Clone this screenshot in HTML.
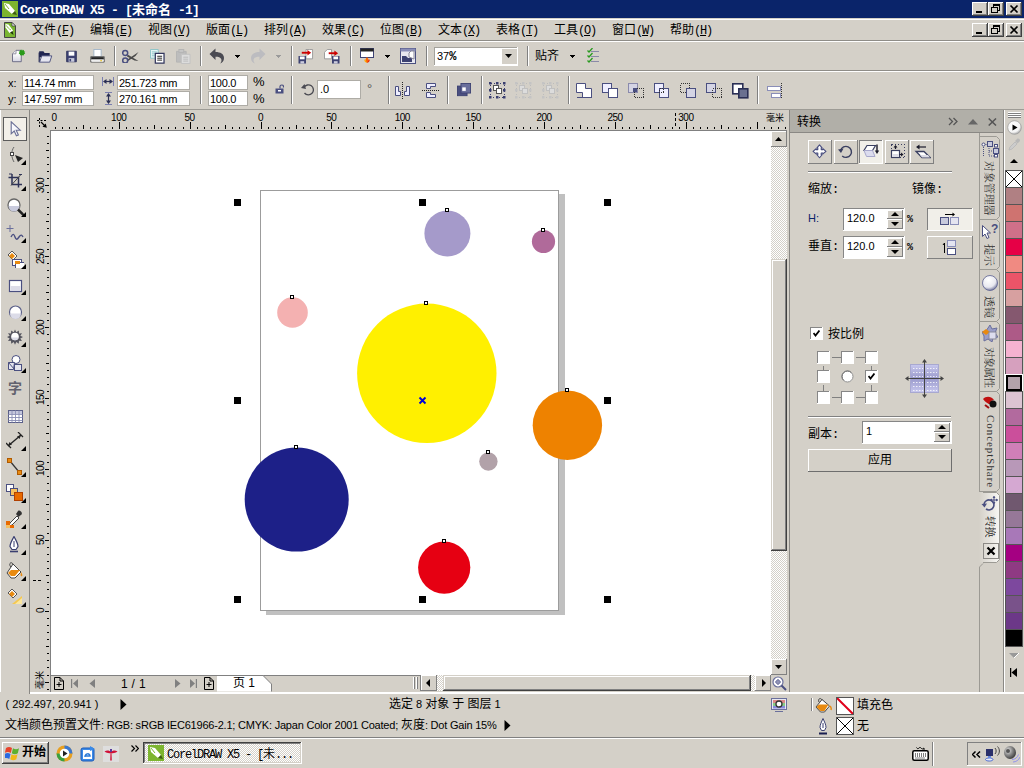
<!DOCTYPE html><html><head><meta charset="utf-8"><title>CorelDRAW X5</title><style>
html,body{margin:0;padding:0;}
body{width:1024px;height:768px;overflow:hidden;background:#D4D0C8;position:relative;
font-family:"Liberation Sans",sans-serif;font-size:11px;color:#000;}
div{position:absolute;box-sizing:border-box;}
.t{white-space:nowrap;line-height:1;}
.cj{fill:currentColor;display:inline-block;}
.cjk{font-family:"Liberation Sans","Noto Sans CJK SC",sans-serif;letter-spacing:0;}
.m{font-family:"Liberation Mono",monospace;font-size:12px;letter-spacing:-1.2px;}
u{text-decoration:underline;}
</style></head><body><div style="left:0px;top:0px;width:1024px;height:18px;background:#0A246A;"></div><svg style="position:absolute;left:2px;top:1px;" width="16" height="16" viewBox="0 0 16 16"><rect x="0" y="0" width="16" height="16" fill="#7DB52F"/><path d="M2 2l5 1 6 7-3 3-7-6z" fill="#fff"/><path d="M10 13l3-3 2 4z" fill="#3C5A14"/><path d="M3 3l4 5" stroke="#7DB52F" stroke-width="1"/></svg><div class="t" style="left:20px;top:3px;color:#fff;font-family:'Liberation Mono',monospace;font-weight:bold;font-size:13px;letter-spacing:-0.8px;">CorelDRAW X5 - [<span class="cjk" style="font-size:13px;font-weight:bold;">未命名</span> -1]</div><div style="left:972px;top:2px;width:16px;height:14px;background:#D4D0C8;"></div><div style="left:972px;top:2px;width:16px;height:1px;background:#fff;"></div><div style="left:972px;top:2px;width:1px;height:14px;background:#fff;"></div><div style="left:972px;top:15px;width:16px;height:1px;background:#404040;"></div><div style="left:987px;top:2px;width:1px;height:14px;background:#404040;"></div><div style="left:973px;top:14px;width:14px;height:1px;background:#808080;"></div><div style="left:986px;top:3px;width:1px;height:12px;background:#808080;"></div><div style="left:976px;top:11px;width:6px;height:2px;background:#000;"></div><div style="left:988px;top:2px;width:16px;height:14px;background:#D4D0C8;"></div><div style="left:988px;top:2px;width:16px;height:1px;background:#fff;"></div><div style="left:988px;top:2px;width:1px;height:14px;background:#fff;"></div><div style="left:988px;top:15px;width:16px;height:1px;background:#404040;"></div><div style="left:1003px;top:2px;width:1px;height:14px;background:#404040;"></div><div style="left:989px;top:14px;width:14px;height:1px;background:#808080;"></div><div style="left:1002px;top:3px;width:1px;height:12px;background:#808080;"></div><svg style="position:absolute;left:988px;top:2px;" width="16" height="14"><path d="M5.5 3.5h6v5h-2 M5.5 3v2 M11.5 3v1 M5 2.500h7 M3.500 5.500h6v5h-6z M3 5.500h7" fill="none" stroke="#000" stroke-width="1" shape-rendering="crispEdges"/></svg><div style="left:1006px;top:2px;width:16px;height:14px;background:#D4D0C8;"></div><div style="left:1006px;top:2px;width:16px;height:1px;background:#fff;"></div><div style="left:1006px;top:2px;width:1px;height:14px;background:#fff;"></div><div style="left:1006px;top:15px;width:16px;height:1px;background:#404040;"></div><div style="left:1021px;top:2px;width:1px;height:14px;background:#404040;"></div><div style="left:1007px;top:14px;width:14px;height:1px;background:#808080;"></div><div style="left:1020px;top:3px;width:1px;height:12px;background:#808080;"></div><svg style="position:absolute;left:1006px;top:2px;" width="16" height="14"><path d="M4.500 3.500l7 7 M11.500 3.500l-7 7" stroke="#000" stroke-width="1.700" fill="none"/></svg><div style="left:0px;top:18px;width:1024px;height:1px;background:#D4D0C8;"></div><div style="left:0px;top:19px;width:1024px;height:1px;background:#fff;"></div><svg style="position:absolute;left:4px;top:22px;" width="12" height="16"><path d="M0.500 0.500h7.500l3.500 3.500v11.500h-11z" fill="#7AB530" stroke="#444" stroke-width="1"/><path d="M8 0.500v3.500h3.500z" fill="#fff" stroke="#444" stroke-width="0.800"/><path d="M1.500 2l3 0.500 4.500 6-1 2-2.500 0.500-4-5.500z" fill="#fff"/><path d="M6 10.500l2.500-1.500 1 4z" fill="#1e3208"/><path d="M2.500 3.500c1 2 2.500 3.500 4.500 4.500" stroke="#7AB530" stroke-width="0.900" fill="none"/></svg><div class="t" style="left:32px;top:23.5px;font-family:'Liberation Mono',monospace;font-size:12px;letter-spacing:-1.2px;"><span class="cjk" style="font-size:12px;">文件</span>(<u>F</u>)</div><div class="t" style="left:90px;top:23.5px;font-family:'Liberation Mono',monospace;font-size:12px;letter-spacing:-1.2px;"><span class="cjk" style="font-size:12px;">编辑</span>(<u>E</u>)</div><div class="t" style="left:148px;top:23.5px;font-family:'Liberation Mono',monospace;font-size:12px;letter-spacing:-1.2px;"><span class="cjk" style="font-size:12px;">视图</span>(<u>V</u>)</div><div class="t" style="left:206px;top:23.5px;font-family:'Liberation Mono',monospace;font-size:12px;letter-spacing:-1.2px;"><span class="cjk" style="font-size:12px;">版面</span>(<u>L</u>)</div><div class="t" style="left:264px;top:23.5px;font-family:'Liberation Mono',monospace;font-size:12px;letter-spacing:-1.2px;"><span class="cjk" style="font-size:12px;">排列</span>(<u>A</u>)</div><div class="t" style="left:322px;top:23.5px;font-family:'Liberation Mono',monospace;font-size:12px;letter-spacing:-1.2px;"><span class="cjk" style="font-size:12px;">效果</span>(<u>C</u>)</div><div class="t" style="left:380px;top:23.5px;font-family:'Liberation Mono',monospace;font-size:12px;letter-spacing:-1.2px;"><span class="cjk" style="font-size:12px;">位图</span>(<u>B</u>)</div><div class="t" style="left:438px;top:23.5px;font-family:'Liberation Mono',monospace;font-size:12px;letter-spacing:-1.2px;"><span class="cjk" style="font-size:12px;">文本</span>(<u>X</u>)</div><div class="t" style="left:496px;top:23.5px;font-family:'Liberation Mono',monospace;font-size:12px;letter-spacing:-1.2px;"><span class="cjk" style="font-size:12px;">表格</span>(<u>T</u>)</div><div class="t" style="left:554px;top:23.5px;font-family:'Liberation Mono',monospace;font-size:12px;letter-spacing:-1.2px;"><span class="cjk" style="font-size:12px;">工具</span>(<u>O</u>)</div><div class="t" style="left:612px;top:23.5px;font-family:'Liberation Mono',monospace;font-size:12px;letter-spacing:-1.2px;"><span class="cjk" style="font-size:12px;">窗口</span>(<u>W</u>)</div><div class="t" style="left:670px;top:23.5px;font-family:'Liberation Mono',monospace;font-size:12px;letter-spacing:-1.2px;"><span class="cjk" style="font-size:12px;">帮助</span>(<u>H</u>)</div><div style="left:972px;top:23px;width:16px;height:14px;background:#D4D0C8;"></div><div style="left:972px;top:23px;width:16px;height:1px;background:#fff;"></div><div style="left:972px;top:23px;width:1px;height:14px;background:#fff;"></div><div style="left:972px;top:36px;width:16px;height:1px;background:#404040;"></div><div style="left:987px;top:23px;width:1px;height:14px;background:#404040;"></div><div style="left:973px;top:35px;width:14px;height:1px;background:#808080;"></div><div style="left:986px;top:24px;width:1px;height:12px;background:#808080;"></div><div style="left:976px;top:32px;width:6px;height:2px;background:#000;"></div><div style="left:988px;top:23px;width:16px;height:14px;background:#D4D0C8;"></div><div style="left:988px;top:23px;width:16px;height:1px;background:#fff;"></div><div style="left:988px;top:23px;width:1px;height:14px;background:#fff;"></div><div style="left:988px;top:36px;width:16px;height:1px;background:#404040;"></div><div style="left:1003px;top:23px;width:1px;height:14px;background:#404040;"></div><div style="left:989px;top:35px;width:14px;height:1px;background:#808080;"></div><div style="left:1002px;top:24px;width:1px;height:12px;background:#808080;"></div><svg style="position:absolute;left:988px;top:23px;" width="16" height="14"><path d="M5.5 3.5h6v5h-2 M5.5 3v2 M11.5 3v1 M5 2.5h7 M3.5 5.5h6v5h-6z M3 5.5h7" fill="none" stroke="#000" stroke-width="1" shape-rendering="crispEdges"/></svg><div style="left:1006px;top:23px;width:16px;height:14px;background:#D4D0C8;"></div><div style="left:1006px;top:23px;width:16px;height:1px;background:#fff;"></div><div style="left:1006px;top:23px;width:1px;height:14px;background:#fff;"></div><div style="left:1006px;top:36px;width:16px;height:1px;background:#404040;"></div><div style="left:1021px;top:23px;width:1px;height:14px;background:#404040;"></div><div style="left:1007px;top:35px;width:14px;height:1px;background:#808080;"></div><div style="left:1020px;top:24px;width:1px;height:12px;background:#808080;"></div><svg style="position:absolute;left:1006px;top:23px;" width="16" height="14"><path d="M4.5 3.5l7 7 M11.5 3.5l-7 7" stroke="#000" stroke-width="1.7" fill="none"/></svg><div style="left:0px;top:40px;width:1024px;height:1px;background:#8f8d88;"></div><div style="left:0px;top:41px;width:1024px;height:1px;background:#fff;"></div><div style="left:0px;top:70px;width:1024px;height:1px;background:#8f8d88;"></div><div style="left:0px;top:71px;width:1024px;height:1px;background:#fff;"></div><div style="left:0px;top:109px;width:1024px;height:1px;background:#9d9b95;"></div><div style="left:0px;top:110px;width:1px;height:582px;background:#fff;"></div><svg style="position:absolute;left:12px;top:49px;" width="15" height="14" viewBox="0 0 17 16"><defs><linearGradient id="ng" x1="0" y1="0" x2="0" y2="1"><stop offset="0.3" stop-color="#fff"/><stop offset="1" stop-color="#d4d4e2"/></linearGradient></defs><path d="M0.500 5.500l4-4h6v13h-10z" fill="url(#ng)" stroke="#62627e"/><path d="M0.500 5.500h4v-4" fill="#eeeef4" stroke="#8a8a9a"/><path d="M11 0l1 1.600 1.800-0.800 0 2 1.900 0.600-1.200 1.500 1.200 1.500-1.900 0.600 0 2-1.800-0.800-1 1.600-1-1.600-1.800 0.800 0-2-1.900-0.600 1.200-1.500-1.200-1.500 1.900-0.600 0-2 1.800 0.800z" fill="#2a9a1a" transform="translate(2.500,0.300) scale(0.800)"/></svg><svg style="position:absolute;left:38px;top:50px;" width="15" height="13" viewBox="0 0 16 15.500"><path d="M0.500 1.500h5l1.500 2h6v5h-12.500z" fill="#1f2450"/><path d="M0.500 3v11.500" stroke="#1f2450" stroke-width="1.400"/><path d="M1 14.500l2.500-7.500h12l-2.500 7.500z" fill="#e6e6f0" stroke="#3d4272"/></svg><svg style="position:absolute;left:65px;top:50px;" width="13" height="13" viewBox="0 0 15 16"><path d="M1.5 1.5h12v13h-12z" fill="#3d4272" stroke="#2a2e58"/><rect x="4" y="2" width="7" height="5" fill="#fff"/><rect x="4" y="10" width="7" height="4.5" fill="#c8cadc"/><rect x="5" y="11" width="2" height="3" fill="#3d4272"/></svg><svg style="position:absolute;left:90px;top:49px;" width="15" height="14" viewBox="0 0 16 15.500"><rect x="4" y="0.5" width="8" height="8" fill="#fff" stroke="#9fb4c8"/><path d="M0.5 8.5h15v6h-15z" fill="#fff" stroke="#555"/><rect x="1" y="9" width="14" height="2.5" fill="#222"/><rect x="2" y="12" width="12" height="2" fill="#eee"/><rect x="11" y="12.4" width="2" height="1.2" fill="#e8c020"/></svg><div style="left:114px;top:46px;width:1px;height:20px;background:#808080;"></div><div style="left:115px;top:46px;width:1px;height:20px;background:#fff;"></div><svg style="position:absolute;left:122px;top:49px;" width="17" height="14" viewBox="0 0 17 14"><path d="M5.500 5.500l11 6.500-4-0.500-7.500-4zM5.500 10.500l11-7.500-3 4-7.500 5z" fill="#4a4a4a"/><circle cx="3.200" cy="4" r="2.500" fill="none" stroke="#4a4f80" stroke-width="1.500"/><circle cx="3.200" cy="11.500" r="2.500" fill="none" stroke="#4a4f80" stroke-width="1.500"/></svg><svg style="position:absolute;left:150px;top:49px;" width="15" height="15" viewBox="0 0 15.500 15.500"><path d="M0.500 0.500h8v9h-8z" fill="#e4f4f4" stroke="#8cc4c8"/><path d="M2 3h5M2 5h3M2 7h3" stroke="#8cc4c8"/><path d="M5.500 4.500h9v10h-9z" fill="#fff" stroke="#33375e" stroke-width="1.300"/><path d="M7.500 7.500h5M7.500 9.500h5M7.500 11.500h5" stroke="#222"/></svg><svg style="position:absolute;left:176px;top:49px;" width="15" height="15" viewBox="0 0 15.500 15.500"><path d="M0.500 2.500h10v11h-10z" fill="#bdbdbd" stroke="#b4b4b4"/><rect x="3" y="0.500" width="5" height="3" fill="#c6c6c6" stroke="#b4b4b4"/><path d="M5.500 5.500h9v9.500h-9z" fill="#dcdcdc" stroke="#c2c2c2"/><path d="M7.500 8.500h5M7.500 10.500h5M7.500 12.500h5" stroke="#bcbcbc"/></svg><div style="left:200px;top:46px;width:1px;height:20px;background:#808080;"></div><div style="left:201px;top:46px;width:1px;height:20px;background:#fff;"></div><svg style="position:absolute;left:209px;top:48px;" width="16" height="16" viewBox="0 0 16 16"><path d="M0.5 6l6-5.5v3.5c5 0 8.5 2 8.5 6 0 3-1.5 4.5-4 5.5 1.500-1.500 1.800-3 1.200-4.500-0.800-1.800-2.700-2.300-5.700-2.300v3.300z" fill="#4a4a52"/></svg><svg style="position:absolute;left:234px;top:55px;" width="7" height="4"><path d="M1 0h5v1h-1v1h-1v1h-1v-1h-1v-1h-1z" fill="#000" shape-rendering="crispEdges"/></svg><svg style="position:absolute;left:250px;top:48px;" width="16" height="16" viewBox="0 0 16 16"><g transform="translate(16,0) scale(-1,1)"><path d="M0.5 6l6-5.5v3.5c5 0 8.5 2 8.5 6 0 3-1.5 4.5-4 5.5 1.500-1.500 1.800-3 1.200-4.500-0.800-1.800-2.700-2.300-5.700-2.300v3.300z" fill="#bcbcc0"/></g></svg><svg style="position:absolute;left:275px;top:55px;" width="7" height="4"><path d="M1 0h5v1h-1v1h-1v1h-1v-1h-1v-1h-1z" fill="#9a9a9a" shape-rendering="crispEdges"/></svg><div style="left:291px;top:46px;width:1px;height:20px;background:#808080;"></div><div style="left:292px;top:46px;width:1px;height:20px;background:#fff;"></div><svg style="position:absolute;left:298px;top:49px;" width="16" height="15" viewBox="0 0 17 16"><path d="M8.5 0.5h4l3 0v10h-7z" fill="#fff" stroke="#999"/><path d="M0.5 7.5h8v8h-8z" fill="#3d4272"/><rect x="2" y="8" width="5" height="3" fill="#fff"/><rect x="2.5" y="13" width="4" height="2.5" fill="#ccd"/><path d="M4 4h7" stroke="#c00" stroke-width="2"/><path d="M10 1l4 3-4 3z" fill="#c00"/></svg><svg style="position:absolute;left:324px;top:49px;" width="16" height="15" viewBox="0 0 17 16"><path d="M0.5 3.5l3-3h4.5v10h-7.5z" fill="#fff" stroke="#999"/><path d="M8.5 7.5h8v8h-8z" fill="#3d4272"/><rect x="10" y="8" width="5" height="3" fill="#fff"/><rect x="10.5" y="13" width="4" height="2.5" fill="#ccd"/><path d="M5 4.5h7" stroke="#c00" stroke-width="2"/><path d="M11 1.5l4 3-4 3z" fill="#c00"/></svg><div style="left:350px;top:46px;width:1px;height:20px;background:#808080;"></div><div style="left:351px;top:46px;width:1px;height:20px;background:#fff;"></div><svg style="position:absolute;left:360px;top:48px;" width="14" height="16" viewBox="0 0 14 16"><rect x="0.5" y="0.5" width="13" height="9" fill="#fff" stroke="#3d4272"/><rect x="0.5" y="0.5" width="13" height="3" fill="#222"/><path d="M7 9c-2 2-2 4 0 6 2-2 2-4 0-6z" fill="#f60"/><path d="M5 11c-1 1-1 3 2 4z" fill="#fa0"/><path d="M9 11c1 1 1 3-2 4z" fill="#e20"/></svg><svg style="position:absolute;left:384px;top:55px;" width="7" height="4"><path d="M1 0h5v1h-1v1h-1v1h-1v-1h-1v-1h-1z" fill="#000" shape-rendering="crispEdges"/></svg><svg style="position:absolute;left:400px;top:48px;" width="16" height="16" viewBox="0 0 16 16"><rect x="0.5" y="0.5" width="15" height="15" fill="#e8e8f0" stroke="#4a4f80"/><rect x="0.5" y="0.5" width="15" height="3" fill="#8a8eb8"/><path d="M2 14v-6h4l2 2h4v4z" fill="#3d4272"/><path d="M9 9v-4l2-2h3v8z" fill="#fff" stroke="#889"/></svg><div style="left:426px;top:46px;width:1px;height:20px;background:#808080;"></div><div style="left:427px;top:46px;width:1px;height:20px;background:#fff;"></div><div style="left:434px;top:47px;width:84px;height:19px;background:#fff;"></div><div style="left:434px;top:47px;width:84px;height:1px;background:#a4a29c;"></div><div style="left:434px;top:47px;width:1px;height:19px;background:#a4a29c;"></div><div style="left:434px;top:65px;width:84px;height:1px;background:#fff;"></div><div style="left:517px;top:47px;width:1px;height:19px;background:#fff;"></div><div style="left:502px;top:49px;width:15px;height:15px;background:#D4D0C8;"></div><svg style="position:absolute;left:505px;top:54px;" width="7" height="4"><path d="M0 0h7l-3.500 4z" fill="#000"/></svg><div class="t" style="left:437px;top:51px;font-size:11px;">37<span style="font-family:'Liberation Mono';font-size:12px;letter-spacing:-1.200px;font-weight:bold">%</span></div><div style="left:527px;top:46px;width:1px;height:20px;background:#808080;"></div><div style="left:528px;top:46px;width:1px;height:20px;background:#fff;"></div><div class="t" style="left:535px;top:50px;"><span class="cjk" style="font-size:12px;">贴齐</span></div><svg style="position:absolute;left:569px;top:55px;" width="7" height="4"><path d="M1 0h5v1h-1v1h-1v1h-1v-1h-1v-1h-1z" fill="#000" shape-rendering="crispEdges"/></svg><svg style="position:absolute;left:587px;top:48px;" width="13" height="16" viewBox="0 0 13 16"><path d="M4 3.500h8M4 8.500h8M4 13.500h8" stroke="#8a8aa8" stroke-width="1"/><path d="M0.5 2.5l1.5 1.5 3.5-4M0.5 7.5l1.5 1.5 3.5-4M0.5 12.5l1.5 1.5 3.5-4" stroke="#2a9a20" stroke-width="1.3" fill="none"/></svg><div class="t" style="left:8px;top:78px;font-size:11px;">x:</div><div class="t" style="left:8px;top:94px;font-size:11px;">y:</div><div style="left:22px;top:75px;width:72px;height:15px;background:#fff;border:1px solid #aeaca6;"></div><div class="t" style="left:24px;top:78px;font-size:11px;letter-spacing:-0.3px;">114.74 mm</div><div style="left:22px;top:91px;width:72px;height:15px;background:#fff;border:1px solid #aeaca6;"></div><div class="t" style="left:24px;top:94px;font-size:11px;letter-spacing:-0.3px;">147.597 mm</div><svg style="position:absolute;left:102px;top:77px;" width="12" height="9" viewBox="0 0 12 9"><path d="M0.500 0v9M11.500 0v9" stroke="#7a7eb0"/><path d="M2 4.500h8" stroke="#2a2f55" stroke-width="1.200"/><path d="M1 4.500l3.500-2.500v5zM11 4.500l-3.500-2.500v5z" fill="#2a2f55"/></svg><svg style="position:absolute;left:105px;top:92px;" width="7" height="13" viewBox="0 0 7 13"><path d="M0 0.500h7M0 12.500h7" stroke="#7a7eb0"/><path d="M3.500 2v9" stroke="#2a2f55" stroke-width="1.200"/><path d="M3.500 1l-2.500 3.500h5zM3.500 12l-2.500-3.500h5z" fill="#2a2f55"/></svg><div style="left:117px;top:75px;width:73px;height:15px;background:#fff;border:1px solid #aeaca6;"></div><div class="t" style="left:119px;top:78px;font-size:11px;letter-spacing:-0.3px;">251.723 mm</div><div style="left:117px;top:91px;width:73px;height:15px;background:#fff;border:1px solid #aeaca6;"></div><div class="t" style="left:119px;top:94px;font-size:11px;letter-spacing:-0.3px;">270.161 mm</div><div style="left:200px;top:76px;width:1px;height:28px;background:#808080;"></div><div style="left:201px;top:76px;width:1px;height:28px;background:#fff;"></div><div style="left:208px;top:75px;width:40px;height:15px;background:#fff;border:1px solid #aeaca6;"></div><div class="t" style="left:210px;top:78px;font-size:11px;letter-spacing:-0.3px;">100.0</div><div style="left:208px;top:91px;width:40px;height:15px;background:#fff;border:1px solid #aeaca6;"></div><div class="t" style="left:210px;top:94px;font-size:11px;letter-spacing:-0.3px;">100.0</div><div class="t" style="left:253px;top:75px;font-size:13px;">%</div><div class="t" style="left:253px;top:92px;font-size:13px;">%</div><svg style="position:absolute;left:275px;top:84px;" width="9" height="10" viewBox="0 0 9 10"><rect x="0.5" y="4.5" width="8" height="5" fill="#4a4f80"/><path d="M5 4.5v-2c0-2 3.5-2 3.5 0v1" fill="none" stroke="#4a4f80" stroke-width="1.2"/><rect x="3" y="6" width="3" height="1.5" fill="#fff"/></svg><div style="left:291px;top:76px;width:1px;height:28px;background:#808080;"></div><div style="left:292px;top:76px;width:1px;height:28px;background:#fff;"></div><svg style="position:absolute;left:301px;top:83px;" width="13" height="13" viewBox="0 0 13 13"><path d="M3 4.5a5 5 0 1 1 0.5 5.5" fill="none" stroke="#4a4a52" stroke-width="1.3"/><path d="M0 5l3.5-4 1.5 5z" fill="#4a4a52"/></svg><div style="left:317px;top:80px;width:44px;height:19px;background:#fff;border:1px solid #aeaca6;"></div><div class="t" style="left:320px;top:84px;font-size:11px;">.0</div><div class="t" style="left:367px;top:82px;font-size:13px;color:#555;">°</div><div style="left:388px;top:76px;width:1px;height:28px;background:#808080;"></div><div style="left:389px;top:76px;width:1px;height:28px;background:#fff;"></div><svg style="position:absolute;left:394px;top:82px;" width="17" height="17" viewBox="0 0 17 17"><path d="M8.5 0v17" stroke="#222" stroke-dasharray="1 1" shape-rendering="crispEdges"/><path d="M1.5 4.5h3v5h2v4h-5zM15.5 4.5h-3v5h-2v4h5z" fill="#eef" stroke="#4a4f80"/></svg><svg style="position:absolute;left:422px;top:82px;" width="17" height="17" viewBox="0 0 17 17"><path d="M0 8.5h17" stroke="#222" stroke-dasharray="1 1" shape-rendering="crispEdges"/><path d="M4.5 1.5h9v3h-5v2h-4zM4.5 15.5h9v-3h-5v-2h-4z" fill="#eef" stroke="#4a4f80"/></svg><div style="left:447px;top:76px;width:1px;height:28px;background:#808080;"></div><div style="left:448px;top:76px;width:1px;height:28px;background:#fff;"></div><svg style="position:absolute;left:457px;top:83px;" width="14" height="14" viewBox="0 0 16 16"><rect x="0.5" y="3.5" width="11" height="11" fill="#4a4f80" stroke="#3a3f70"/><rect x="4.5" y="0.5" width="11" height="11" fill="#6a6f9c" stroke="#3a3f70"/><rect x="6" y="5" width="4" height="4" fill="#fff"/></svg><div style="left:481px;top:76px;width:1px;height:28px;background:#808080;"></div><div style="left:482px;top:76px;width:1px;height:28px;background:#fff;"></div><svg style="position:absolute;left:489px;top:82px;" width="17" height="17" viewBox="0 0 17 17"><rect x="1.5" y="1.5" width="14" height="14" fill="none" stroke="#3a3f70" stroke-dasharray="1 2" shape-rendering="crispEdges"/><rect x="4.5" y="3.5" width="5" height="5" fill="#fff" stroke="#555"/><rect x="7.5" y="6.5" width="5" height="5" fill="#fff" stroke="#555"/><rect x="0" y="0" width="2.5" height="2.5" fill="#3a3f70"/><rect x="7" y="0" width="2.5" height="2.5" fill="#3a3f70"/><rect x="14" y="0" width="2.5" height="2.5" fill="#3a3f70"/><rect x="0" y="7" width="2.5" height="2.5" fill="#3a3f70"/><rect x="14" y="7" width="2.5" height="2.5" fill="#3a3f70"/><rect x="0" y="14" width="2.5" height="2.5" fill="#3a3f70"/><rect x="7" y="14" width="2.5" height="2.5" fill="#3a3f70"/><rect x="14" y="14" width="2.5" height="2.5" fill="#3a3f70"/></svg><svg style="position:absolute;left:515px;top:82px;" width="17" height="17" viewBox="0 0 17 17"><rect x="1.5" y="1.5" width="14" height="14" fill="none" stroke="#bcbcbc" stroke-dasharray="1 2" shape-rendering="crispEdges"/><rect x="4.5" y="3.5" width="5" height="5" fill="#dcdcdc" stroke="#c0c0c0"/><rect x="7.5" y="6.5" width="5" height="5" fill="#dcdcdc" stroke="#c0c0c0"/><rect x="0" y="0" width="2.5" height="2.5" fill="#c4c4c4"/><rect x="7" y="0" width="2.5" height="2.5" fill="#c4c4c4"/><rect x="14" y="0" width="2.5" height="2.5" fill="#c4c4c4"/><rect x="0" y="7" width="2.5" height="2.5" fill="#c4c4c4"/><rect x="14" y="7" width="2.5" height="2.5" fill="#c4c4c4"/><rect x="0" y="14" width="2.5" height="2.5" fill="#c4c4c4"/><rect x="7" y="14" width="2.5" height="2.5" fill="#c4c4c4"/><rect x="14" y="14" width="2.5" height="2.5" fill="#c4c4c4"/></svg><svg style="position:absolute;left:542px;top:82px;" width="17" height="17" viewBox="0 0 17 17"><rect x="1.5" y="1.5" width="14" height="14" fill="none" stroke="#bcbcbc" stroke-dasharray="1 2" shape-rendering="crispEdges"/><rect x="4.5" y="3.5" width="5" height="5" fill="#dcdcdc" stroke="#c0c0c0"/><rect x="7.5" y="6.5" width="5" height="5" fill="#dcdcdc" stroke="#c0c0c0"/><rect x="0" y="0" width="2.5" height="2.5" fill="#c4c4c4"/><rect x="7" y="0" width="2.5" height="2.5" fill="#c4c4c4"/><rect x="14" y="0" width="2.5" height="2.5" fill="#c4c4c4"/><rect x="0" y="7" width="2.5" height="2.5" fill="#c4c4c4"/><rect x="14" y="7" width="2.5" height="2.5" fill="#c4c4c4"/><rect x="0" y="14" width="2.5" height="2.5" fill="#c4c4c4"/><rect x="7" y="14" width="2.5" height="2.5" fill="#c4c4c4"/><rect x="14" y="14" width="2.5" height="2.5" fill="#c4c4c4"/></svg><div style="left:568px;top:76px;width:1px;height:28px;background:#808080;"></div><div style="left:569px;top:76px;width:1px;height:28px;background:#fff;"></div><svg style="position:absolute;left:576px;top:83px;" width="17" height="16" viewBox="0 0 17 16"><path d="M0.5 0.5h9v5h6v9h-9v-5h-6z" fill="#fff" stroke="#4a4f80"/><path d="M1 14.5h14M15.5 6v9" stroke="#4a4f80"/></svg><svg style="position:absolute;left:602px;top:83px;" width="17" height="16" viewBox="0 0 17 16"><rect x="0.5" y="0.5" width="9" height="9" fill="#eef" stroke="#4a4f80"/><rect x="6.5" y="5.5" width="9" height="9" fill="#fff" stroke="#4a4f80"/></svg><svg style="position:absolute;left:628px;top:83px;" width="17" height="16" viewBox="0 0 17 16"><rect x="0.5" y="0.5" width="9" height="9" fill="#d4d4e4" stroke="#8a8aac"/><rect x="6.5" y="5.5" width="9" height="9" fill="none" stroke="#333" stroke-dasharray="1 1" shape-rendering="crispEdges"/><rect x="5" y="5" width="4" height="4" fill="#4a4f80"/></svg><svg style="position:absolute;left:654px;top:83px;" width="17" height="16" viewBox="0 0 17 16"><rect x="0.5" y="0.5" width="9" height="9" fill="#eef" stroke="#4a4f80"/><rect x="5.5" y="5.5" width="9" height="9" fill="#eef" stroke="#4a4f80"/><rect x="5.5" y="5.5" width="4" height="4" fill="none" stroke="#333" stroke-dasharray="1 1" shape-rendering="crispEdges"/></svg><svg style="position:absolute;left:680px;top:83px;" width="17" height="16" viewBox="0 0 17 16"><rect x="0.5" y="0.5" width="9" height="9" fill="none" stroke="#333" stroke-dasharray="1 1" shape-rendering="crispEdges"/><rect x="6.5" y="5.5" width="9" height="9" fill="#d4d4e4" stroke="#4a4f80"/></svg><svg style="position:absolute;left:706px;top:83px;" width="17" height="16" viewBox="0 0 17 16"><rect x="0.5" y="0.5" width="9" height="9" fill="#d4d4e4" stroke="#4a4f80"/><rect x="6.5" y="5.5" width="9" height="9" fill="none" stroke="#333" stroke-dasharray="1 1" shape-rendering="crispEdges"/></svg><svg style="position:absolute;left:732px;top:83px;" width="17" height="16" viewBox="0 0 17 16"><rect x="0.800" y="0.800" width="10" height="10" fill="#fff" stroke="#2a2f55" stroke-width="1.600"/><rect x="6.800" y="5.800" width="9" height="9" fill="#6a7090" stroke="#2a2f55" stroke-width="1.600"/></svg><div style="left:757px;top:76px;width:1px;height:28px;background:#808080;"></div><div style="left:758px;top:76px;width:1px;height:28px;background:#fff;"></div><svg style="position:absolute;left:767px;top:83px;" width="16" height="16" viewBox="0 0 16 16"><path d="M14.5 0v16" stroke="#333" stroke-dasharray="1 1" shape-rendering="crispEdges"/><rect x="0.5" y="3.5" width="13" height="4" fill="#fff" stroke="#8a8eb8"/><rect x="4.5" y="10.5" width="9" height="4" fill="#fff" stroke="#8a8eb8"/></svg><div style="left:29px;top:110px;width:1px;height:584px;background:#8a8884;"></div><div style="left:3px;top:117px;width:24px;height:24px;background:#F3F0E9;border:1px solid #5c5c5c;"></div><svg style="position:absolute;left:6px;top:121px;" width="18" height="18" viewBox="0 0 18 18"><path d="M4.500 0.800v12l3-2.800 2.200 4.800 2-0.900-2.200-4.700h4z" fill="#f8f8fc" stroke="#6a6f96" stroke-width="1.100" transform="translate(0.700,0)"/></svg><svg style="position:absolute;left:6px;top:146px;" width="18" height="18" viewBox="0 0 18 18"><path d="M8 1c-3 4-3 10 0 15" fill="none" stroke="#666"/><rect x="4.5" y="6.5" width="3" height="3" fill="#fff" stroke="#444"/><path d="M9 9l8 3-5 4z" fill="#222"/></svg><svg style="position:absolute;left:21px;top:160px;" width="5" height="5"><path d="M5 0v5h-5z" fill="#000"/></svg><svg style="position:absolute;left:6px;top:172px;" width="18" height="18" viewBox="0 0 18 18"><path d="M6 2v10.500h10M2.500 5.500h10v10" fill="none" stroke="#2e3358" stroke-width="1.500"/><path d="M15 2.500l-10 11" stroke="#444" stroke-width="1"/><path d="M3 2l3 0M13 2.500h3" stroke="#2e3358" stroke-width="1"/></svg><svg style="position:absolute;left:21px;top:186px;" width="5" height="5"><path d="M5 0v5h-5z" fill="#000"/></svg><svg style="position:absolute;left:6px;top:198px;" width="18" height="18" viewBox="0 0 18 18"><circle cx="8" cy="7" r="6" fill="#fff" stroke="#666" stroke-width="1.3"/><path d="M2.5 8a5.5 5.5 0 0 0 11 0z" fill="#c8cadc"/><path d="M12 11.5l6 6" stroke="#222" stroke-width="2.5"/></svg><svg style="position:absolute;left:21px;top:212px;" width="5" height="5"><path d="M5 0v5h-5z" fill="#000"/></svg><svg style="position:absolute;left:6px;top:224px;" width="18" height="18" viewBox="0 0 18 18"><path d="M4 1v7M0.5 4.5h7" stroke="#6a6f9c"/><path d="M5 13c2-4 3-3 4 0s2 3 4 0 3-2 4 0" fill="none" stroke="#4a4f80" stroke-width="1.4"/></svg><svg style="position:absolute;left:21px;top:238px;" width="5" height="5"><path d="M5 0v5h-5z" fill="#000"/></svg><svg style="position:absolute;left:6px;top:250px;" width="18" height="18" viewBox="0 0 18 18"><path d="M2 5l4-4 5 5-4 4z" fill="#fff" stroke="#555"/><path d="M3 6l3-3 3 3-3 3z" fill="#e88a10"/><rect x="6.5" y="9.5" width="9" height="6" fill="#fff" stroke="#4a4f80"/><rect x="9.5" y="12.5" width="9" height="6" fill="#fff" stroke="#4a4f80"/><path d="M9 11h5v3h-5z" fill="#e88a10"/></svg><svg style="position:absolute;left:21px;top:264px;" width="5" height="5"><path d="M5 0v5h-5z" fill="#000"/></svg><svg style="position:absolute;left:6px;top:276px;" width="18" height="18" viewBox="0 0 18 18"><rect x="3.500" y="4.500" width="12" height="11" fill="#fff" stroke="#4a4f80" stroke-width="1.200"/><rect x="4.500" y="10" width="10" height="5" fill="#dcdce8"/></svg><svg style="position:absolute;left:21px;top:290px;" width="5" height="5"><path d="M5 0v5h-5z" fill="#000"/></svg><svg style="position:absolute;left:6px;top:302px;" width="18" height="18" viewBox="0 0 18 18"><circle cx="9.500" cy="10" r="6" fill="#fff" stroke="#5a5f88" stroke-width="1.200"/><path d="M4 11.500a5.500 5.500 0 0 0 11 0z" fill="#dcdce8"/></svg><svg style="position:absolute;left:21px;top:316px;" width="5" height="5"><path d="M5 0v5h-5z" fill="#000"/></svg><svg style="position:absolute;left:6px;top:328px;" width="18" height="18" viewBox="0 0 18 18"><path d="M9 1.500l1.300 2.700 2.500-1.700 0.200 3 3-0.200-1.700 2.500 2.700 1.300-2.700 1.300 1.700 2.500-3-0.200-0.200 3-2.500-1.700-1.300 2.700-1.300-2.700-2.500 1.700-0.200-3-3 0.200 1.700-2.500-2.700-1.300 2.700-1.300-1.700-2.500 3 0.200 0.200-3 2.500 1.700z" fill="#55555f"/><circle cx="9" cy="8.500" r="3.800" fill="#fff"/><path d="M5.500 9.500a3.600 3.600 0 0 0 7 0z" fill="#dcdce8"/></svg><svg style="position:absolute;left:21px;top:342px;" width="5" height="5"><path d="M5 0v5h-5z" fill="#000"/></svg><svg style="position:absolute;left:6px;top:354px;" width="18" height="18" viewBox="0 0 18 18"><circle cx="10" cy="5.500" r="4" fill="#fff" stroke="#4a4f80"/><path d="M2.500 8.500h6l-1 7h-5z" fill="#e4e4ee" stroke="#4a4f80"/><path d="M2.500 8.500l6 7" stroke="#4a4f80"/><rect x="8.500" y="10.500" width="7" height="6" fill="#e4e4ee" stroke="#4a4f80"/></svg><svg style="position:absolute;left:21px;top:368px;" width="5" height="5"><path d="M5 0v5h-5z" fill="#000"/></svg><div class="t" style="left:8px;top:381px;"><span class="cjk" style="font-size:14px;font-weight:bold;color:#62626e;">字</span></div><svg style="position:absolute;left:8px;top:410px;" width="15" height="13"><rect x="0.500" y="0.500" width="14" height="12" fill="#fff" stroke="#5a5f88"/><rect x="1" y="1" width="13" height="3" fill="#c4c6dc"/><path d="M0.500 4.500h14M0.500 7.500h14M0.500 10.500h14M4 0.500v12M7.500 0.500v12M11 0.500v12" stroke="#8a8eb4" stroke-width="0.900"/></svg><svg style="position:absolute;left:6px;top:432px;" width="18" height="18" viewBox="0 0 18 18"><path d="M2 14l13-11" stroke="#222" stroke-width="1.3"/><path d="M0 11l5 5M12 0l5 5" stroke="#222" stroke-width="1.3"/><path d="M2 14l4-1.500-2.500-2.500zM15 3l-4 1.500 2.500 2.500z" fill="#222"/></svg><svg style="position:absolute;left:21px;top:446px;" width="5" height="5"><path d="M5 0v5h-5z" fill="#000"/></svg><svg style="position:absolute;left:6px;top:458px;" width="18" height="18" viewBox="0 0 18 18"><path d="M4 3l9 11" stroke="#333" stroke-width="1.2"/><rect x="1.5" y="0.5" width="4" height="4" fill="#e88a10" stroke="#b05a00"/><rect x="11.5" y="12.5" width="4" height="4" fill="#e88a10" stroke="#b05a00"/></svg><svg style="position:absolute;left:21px;top:472px;" width="5" height="5"><path d="M5 0v5h-5z" fill="#000"/></svg><svg style="position:absolute;left:6px;top:484px;" width="18" height="18" viewBox="0 0 18 18"><rect x="0.5" y="0.5" width="7" height="7" fill="#fff" stroke="#4a4f80"/><rect x="4.5" y="4.5" width="7" height="7" fill="#f5c060" stroke="#4a4f80"/><rect x="8.5" y="8.5" width="8" height="8" fill="#e86a00" stroke="#b04000"/></svg><svg style="position:absolute;left:21px;top:498px;" width="5" height="5"><path d="M5 0v5h-5z" fill="#000"/></svg><svg style="position:absolute;left:6px;top:510px;" width="18" height="18" viewBox="0 0 18 18"><path d="M4 13l7-7 2 2-7 7-3 1z" fill="#fff" stroke="#444"/><path d="M10 4l2-3c1.500-1.500 5 1.500 3.500 3.500l-3 2.500z" fill="#333"/><rect x="0" y="11" width="4" height="4" fill="#e86a00"/><rect x="4" y="15" width="4" height="3" fill="#e86a00"/><rect x="0" y="15" width="4" height="3" fill="#f5c060"/></svg><svg style="position:absolute;left:21px;top:524px;" width="5" height="5"><path d="M5 0v5h-5z" fill="#000"/></svg><svg style="position:absolute;left:6px;top:536px;" width="18" height="18" viewBox="0 0 18 18"><path d="M8 0.500c-2 4-4 7-4 10l2 3h4l2-3c0-3-2-6-4-10z" fill="#fff" stroke="#3a3f70" stroke-width="1.2"/><path d="M8 5v6" stroke="#3a3f70"/><path d="M4 15.500h8" stroke="#3a3f70" stroke-width="1.6"/></svg><svg style="position:absolute;left:21px;top:550px;" width="5" height="5"><path d="M5 0v5h-5z" fill="#000"/></svg><svg style="position:absolute;left:6px;top:562px;" width="18" height="18" viewBox="0 0 18 18"><path d="M7 2l8 8-6 6h-4l-4-5z" fill="#fff" stroke="#444"/><path d="M2 11l3-3h9l-5 6h-4z" fill="#e88a10"/><path d="M7 2c-2-3-5 0-2 3" fill="none" stroke="#444"/><path d="M15 10c1 2 2 3 1 4s-2 0-1-4z" fill="#e88a10"/></svg><svg style="position:absolute;left:21px;top:576px;" width="5" height="5"><path d="M5 0v5h-5z" fill="#000"/></svg><svg style="position:absolute;left:6px;top:588px;" width="18" height="18" viewBox="0 0 18 18"><path d="M2 5l4-4 5 5-4 4z" fill="#fff" stroke="#555"/><path d="M3 6l3-3 3 3-3 3z" fill="#e88a10"/><path d="M6 16h10v-8z" fill="#f5c850"/><path d="M9 16h7v-6z" fill="#fbe6a0"/></svg><svg style="position:absolute;left:21px;top:602px;" width="5" height="5"><path d="M5 0v5h-5z" fill="#000"/></svg><div style="left:51px;top:131px;width:720px;height:544px;background:#fff;"></div><div style="left:50px;top:130px;width:737px;height:1px;background:#808080;"></div><div style="left:50px;top:130px;width:1px;height:562px;background:#808080;"></div><svg style="position:absolute;left:0px;top:110px;shape-rendering:crispEdges;" width="788" height="20"><rect x="55" y="17" width="1" height="2"/><rect x="62" y="17" width="1" height="2"/><rect x="69" y="17" width="1" height="2"/><rect x="76" y="17" width="1" height="2"/><rect x="83" y="15" width="1" height="4"/><rect x="90" y="17" width="1" height="2"/><rect x="97" y="17" width="1" height="2"/><rect x="105" y="17" width="1" height="2"/><rect x="112" y="17" width="1" height="2"/><rect x="119" y="12" width="1" height="7"/><rect x="126" y="17" width="1" height="2"/><rect x="133" y="17" width="1" height="2"/><rect x="140" y="17" width="1" height="2"/><rect x="147" y="17" width="1" height="2"/><rect x="154" y="15" width="1" height="4"/><rect x="161" y="17" width="1" height="2"/><rect x="168" y="17" width="1" height="2"/><rect x="175" y="17" width="1" height="2"/><rect x="183" y="17" width="1" height="2"/><rect x="190" y="12" width="1" height="7"/><rect x="197" y="17" width="1" height="2"/><rect x="204" y="17" width="1" height="2"/><rect x="211" y="17" width="1" height="2"/><rect x="218" y="17" width="1" height="2"/><rect x="225" y="15" width="1" height="4"/><rect x="232" y="17" width="1" height="2"/><rect x="239" y="17" width="1" height="2"/><rect x="246" y="17" width="1" height="2"/><rect x="253" y="17" width="1" height="2"/><rect x="261" y="12" width="1" height="7"/><rect x="268" y="17" width="1" height="2"/><rect x="275" y="17" width="1" height="2"/><rect x="282" y="17" width="1" height="2"/><rect x="289" y="17" width="1" height="2"/><rect x="296" y="15" width="1" height="4"/><rect x="303" y="17" width="1" height="2"/><rect x="310" y="17" width="1" height="2"/><rect x="317" y="17" width="1" height="2"/><rect x="324" y="17" width="1" height="2"/><rect x="331" y="12" width="1" height="7"/><rect x="338" y="17" width="1" height="2"/><rect x="346" y="17" width="1" height="2"/><rect x="353" y="17" width="1" height="2"/><rect x="360" y="17" width="1" height="2"/><rect x="367" y="15" width="1" height="4"/><rect x="374" y="17" width="1" height="2"/><rect x="381" y="17" width="1" height="2"/><rect x="388" y="17" width="1" height="2"/><rect x="395" y="17" width="1" height="2"/><rect x="402" y="12" width="1" height="7"/><rect x="409" y="17" width="1" height="2"/><rect x="416" y="17" width="1" height="2"/><rect x="424" y="17" width="1" height="2"/><rect x="431" y="17" width="1" height="2"/><rect x="438" y="15" width="1" height="4"/><rect x="445" y="17" width="1" height="2"/><rect x="452" y="17" width="1" height="2"/><rect x="459" y="17" width="1" height="2"/><rect x="466" y="17" width="1" height="2"/><rect x="473" y="12" width="1" height="7"/><rect x="480" y="17" width="1" height="2"/><rect x="487" y="17" width="1" height="2"/><rect x="494" y="17" width="1" height="2"/><rect x="502" y="17" width="1" height="2"/><rect x="509" y="15" width="1" height="4"/><rect x="516" y="17" width="1" height="2"/><rect x="523" y="17" width="1" height="2"/><rect x="530" y="17" width="1" height="2"/><rect x="537" y="17" width="1" height="2"/><rect x="544" y="12" width="1" height="7"/><rect x="551" y="17" width="1" height="2"/><rect x="558" y="17" width="1" height="2"/><rect x="565" y="17" width="1" height="2"/><rect x="572" y="17" width="1" height="2"/><rect x="580" y="15" width="1" height="4"/><rect x="587" y="17" width="1" height="2"/><rect x="594" y="17" width="1" height="2"/><rect x="601" y="17" width="1" height="2"/><rect x="608" y="17" width="1" height="2"/><rect x="615" y="12" width="1" height="7"/><rect x="622" y="17" width="1" height="2"/><rect x="629" y="17" width="1" height="2"/><rect x="636" y="17" width="1" height="2"/><rect x="643" y="17" width="1" height="2"/><rect x="650" y="15" width="1" height="4"/><rect x="658" y="17" width="1" height="2"/><rect x="665" y="17" width="1" height="2"/><rect x="672" y="17" width="1" height="2"/><rect x="679" y="17" width="1" height="2"/><rect x="686" y="12" width="1" height="7"/><rect x="693" y="17" width="1" height="2"/><rect x="700" y="17" width="1" height="2"/><rect x="707" y="17" width="1" height="2"/><rect x="714" y="17" width="1" height="2"/><rect x="721" y="15" width="1" height="4"/><rect x="728" y="17" width="1" height="2"/><rect x="736" y="17" width="1" height="2"/><rect x="743" y="17" width="1" height="2"/><rect x="750" y="17" width="1" height="2"/><rect x="757" y="12" width="1" height="7"/><rect x="764" y="17" width="1" height="2"/><rect x="771" y="17" width="1" height="2"/><rect x="778" y="17" width="1" height="2"/><rect x="785" y="17" width="1" height="2"/></svg><div class="t" style="left:51.5px;top:112.9px;font-size:10px;letter-spacing:-0.500px;">0</div><div class="t" style="left:111.1px;top:112.9px;font-size:10px;letter-spacing:-0.500px;">100</div><div class="t" style="left:184.5px;top:112.9px;font-size:10px;letter-spacing:-0.500px;">50</div><div class="t" style="left:258.0px;top:112.9px;font-size:10px;letter-spacing:-0.500px;">0</div><div class="t" style="left:326.3px;top:112.9px;font-size:10px;letter-spacing:-0.500px;">50</div><div class="t" style="left:394.7px;top:112.9px;font-size:10px;letter-spacing:-0.500px;">100</div><div class="t" style="left:465.6px;top:112.9px;font-size:10px;letter-spacing:-0.500px;">150</div><div class="t" style="left:536.5px;top:112.9px;font-size:10px;letter-spacing:-0.500px;">200</div><div class="t" style="left:607.4px;top:112.9px;font-size:10px;letter-spacing:-0.500px;">250</div><div class="t" style="left:678.3px;top:112.9px;font-size:10px;letter-spacing:-0.500px;">300</div><div class="t" style="left:766px;top:114px;font-size:9px;"><span class="cjk" style="font-size:9px;">毫米</span></div><svg style="position:absolute;left:30px;top:0px;shape-rendering:crispEdges;" width="20" height="692"><rect x="17" y="689" width="2" height="1"/><rect x="15" y="682" width="4" height="1"/><rect x="17" y="675" width="2" height="1"/><rect x="17" y="667" width="2" height="1"/><rect x="17" y="660" width="2" height="1"/><rect x="17" y="653" width="2" height="1"/><rect x="16" y="646" width="3" height="1"/><rect x="17" y="639" width="2" height="1"/><rect x="17" y="632" width="2" height="1"/><rect x="17" y="625" width="2" height="1"/><rect x="17" y="618" width="2" height="1"/><rect x="15" y="611" width="4" height="1"/><rect x="17" y="604" width="2" height="1"/><rect x="17" y="597" width="2" height="1"/><rect x="17" y="589" width="2" height="1"/><rect x="17" y="582" width="2" height="1"/><rect x="16" y="575" width="3" height="1"/><rect x="17" y="568" width="2" height="1"/><rect x="17" y="561" width="2" height="1"/><rect x="17" y="554" width="2" height="1"/><rect x="17" y="547" width="2" height="1"/><rect x="15" y="540" width="4" height="1"/><rect x="17" y="533" width="2" height="1"/><rect x="17" y="526" width="2" height="1"/><rect x="17" y="519" width="2" height="1"/><rect x="17" y="511" width="2" height="1"/><rect x="16" y="504" width="3" height="1"/><rect x="17" y="497" width="2" height="1"/><rect x="17" y="490" width="2" height="1"/><rect x="17" y="483" width="2" height="1"/><rect x="17" y="476" width="2" height="1"/><rect x="15" y="469" width="4" height="1"/><rect x="17" y="462" width="2" height="1"/><rect x="17" y="455" width="2" height="1"/><rect x="17" y="448" width="2" height="1"/><rect x="17" y="441" width="2" height="1"/><rect x="16" y="433" width="3" height="1"/><rect x="17" y="426" width="2" height="1"/><rect x="17" y="419" width="2" height="1"/><rect x="17" y="412" width="2" height="1"/><rect x="17" y="405" width="2" height="1"/><rect x="15" y="398" width="4" height="1"/><rect x="17" y="391" width="2" height="1"/><rect x="17" y="384" width="2" height="1"/><rect x="17" y="377" width="2" height="1"/><rect x="17" y="370" width="2" height="1"/><rect x="16" y="363" width="3" height="1"/><rect x="17" y="355" width="2" height="1"/><rect x="17" y="348" width="2" height="1"/><rect x="17" y="341" width="2" height="1"/><rect x="17" y="334" width="2" height="1"/><rect x="15" y="327" width="4" height="1"/><rect x="17" y="320" width="2" height="1"/><rect x="17" y="313" width="2" height="1"/><rect x="17" y="306" width="2" height="1"/><rect x="17" y="299" width="2" height="1"/><rect x="16" y="292" width="3" height="1"/><rect x="17" y="285" width="2" height="1"/><rect x="17" y="277" width="2" height="1"/><rect x="17" y="270" width="2" height="1"/><rect x="17" y="263" width="2" height="1"/><rect x="15" y="256" width="4" height="1"/><rect x="17" y="249" width="2" height="1"/><rect x="17" y="242" width="2" height="1"/><rect x="17" y="235" width="2" height="1"/><rect x="17" y="228" width="2" height="1"/><rect x="16" y="221" width="3" height="1"/><rect x="17" y="214" width="2" height="1"/><rect x="17" y="207" width="2" height="1"/><rect x="17" y="199" width="2" height="1"/><rect x="17" y="192" width="2" height="1"/><rect x="15" y="185" width="4" height="1"/><rect x="17" y="178" width="2" height="1"/><rect x="17" y="171" width="2" height="1"/><rect x="17" y="164" width="2" height="1"/><rect x="17" y="157" width="2" height="1"/><rect x="16" y="150" width="3" height="1"/><rect x="17" y="143" width="2" height="1"/><rect x="17" y="136" width="2" height="1"/></svg><div class="t" style="left:35.500px;top:613.0px;font-size:10px;letter-spacing:-0.500px;transform-origin:0 0;transform:rotate(-90deg);">0</div><div class="t" style="left:35.500px;top:544.7px;font-size:10px;letter-spacing:-0.500px;transform-origin:0 0;transform:rotate(-90deg);">50</div><div class="t" style="left:35.500px;top:476.3px;font-size:10px;letter-spacing:-0.500px;transform-origin:0 0;transform:rotate(-90deg);">100</div><div class="t" style="left:35.500px;top:405.4px;font-size:10px;letter-spacing:-0.500px;transform-origin:0 0;transform:rotate(-90deg);">150</div><div class="t" style="left:35.500px;top:334.5px;font-size:10px;letter-spacing:-0.500px;transform-origin:0 0;transform:rotate(-90deg);">200</div><div class="t" style="left:35.500px;top:263.6px;font-size:10px;letter-spacing:-0.500px;transform-origin:0 0;transform:rotate(-90deg);">250</div><div class="t" style="left:35.500px;top:192.7px;font-size:10px;letter-spacing:-0.500px;transform-origin:0 0;transform:rotate(-90deg);">300</div><svg style="position:absolute;left:36px;top:117px;" width="12" height="12"><path d="M1 3.500h10M3.500 1v10" stroke="#000" stroke-dasharray="2 1.500" fill="none"/><path d="M5 5l4 4" stroke="#000" stroke-width="1.100"/><path d="M10.800 10.800l-4.300-1 3.300-3.300z" fill="#000"/></svg><div style="left:266px;top:194px;width:299px;height:421px;background:#C0C0C0;"></div><div style="left:260px;top:190px;width:299px;height:421px;background:#fff;border:1px solid #9c9c9c;"></div><svg style="position:absolute;left:0px;top:0px;" width="790" height="700"><circle cx="447.4" cy="233.4" r="23.0" fill="#A59ACA"/><circle cx="543.5" cy="241.5" r="11.6" fill="#B06A9A"/><circle cx="292.5" cy="312.5" r="15.3" fill="#F4B1B1"/><circle cx="426.8" cy="373.3" r="69.7" fill="#FFF000"/><circle cx="567.4" cy="425.3" r="34.7" fill="#EE8200"/><circle cx="488.4" cy="461.5" r="9.2" fill="#B2A2A9"/><circle cx="296.7" cy="499.6" r="52.0" fill="#1D2088"/><circle cx="444.2" cy="567.6" r="26.1" fill="#E60012"/><rect x="445.5" y="208.5" width="3" height="3" fill="#fff" stroke="#000" stroke-width="1" shape-rendering="crispEdges"/><rect x="541.5" y="228.5" width="3" height="3" fill="#fff" stroke="#000" stroke-width="1" shape-rendering="crispEdges"/><rect x="290.5" y="295.5" width="3" height="3" fill="#fff" stroke="#000" stroke-width="1" shape-rendering="crispEdges"/><rect x="424.5" y="301.5" width="3" height="3" fill="#fff" stroke="#000" stroke-width="1" shape-rendering="crispEdges"/><rect x="565.5" y="388.5" width="3" height="3" fill="#fff" stroke="#000" stroke-width="1" shape-rendering="crispEdges"/><rect x="486.5" y="450.5" width="3" height="3" fill="#fff" stroke="#000" stroke-width="1" shape-rendering="crispEdges"/><rect x="294.5" y="445.5" width="3" height="3" fill="#fff" stroke="#000" stroke-width="1" shape-rendering="crispEdges"/><rect x="442.5" y="539.5" width="3" height="3" fill="#fff" stroke="#000" stroke-width="1" shape-rendering="crispEdges"/><rect x="234" y="199" width="7" height="7" fill="#000" shape-rendering="crispEdges"/><rect x="234" y="397" width="7" height="7" fill="#000" shape-rendering="crispEdges"/><rect x="234" y="596" width="7" height="7" fill="#000" shape-rendering="crispEdges"/><rect x="419" y="199" width="7" height="7" fill="#000" shape-rendering="crispEdges"/><rect x="419" y="596" width="7" height="7" fill="#000" shape-rendering="crispEdges"/><rect x="604" y="199" width="7" height="7" fill="#000" shape-rendering="crispEdges"/><rect x="604" y="397" width="7" height="7" fill="#000" shape-rendering="crispEdges"/><rect x="604" y="596" width="7" height="7" fill="#000" shape-rendering="crispEdges"/><path d="M419.500 397.500l6 6M425.500 397.500l-6 6" stroke="#0000D8" stroke-width="1.900"/></svg><svg style="position:absolute;left:31px;top:580px;" width="20" height="2"><path d="M2 0.500h10" stroke="#000" stroke-dasharray="3 2"/></svg><svg style="position:absolute;left:675px;top:113px;" width="1" height="15"><path d="M0.500 0v15" stroke="#000" stroke-dasharray="3 2" shape-rendering="crispEdges"/></svg><div style="left:789px;top:110px;width:1px;height:584px;background:#8a8884;"></div><div style="left:790px;top:110px;width:214px;height:23px;background:#B1AFA8;border-bottom:1px solid #8a8884;"></div><div class="t" style="left:797px;top:116px;"><span class="cjk" style="font-size:12px;">转换</span></div><svg style="position:absolute;left:948px;top:117px;" width="10" height="9"><path d="M1 1l3.500 3.500-3.500 3.500M5.500 1l3.500 3.500-3.500 3.500" fill="none" stroke="#555" stroke-width="1.300"/></svg><svg style="position:absolute;left:968px;top:119px;" width="10" height="6"><path d="M5 0l5 5.500h-10z" fill="#666"/></svg><svg style="position:absolute;left:988px;top:118px;" width="9" height="8"><path d="M0.700 0.500l7.300 7M8 0.500l-7.300 7" stroke="#555" stroke-width="1.500"/></svg><div style="left:808px;top:140px;width:24px;height:24px;background:#D4D0C8;"></div><div style="left:808px;top:140px;width:24px;height:1px;background:#fff;"></div><div style="left:808px;top:140px;width:1px;height:24px;background:#fff;"></div><div style="left:808px;top:163px;width:24px;height:1px;background:#808080;"></div><div style="left:831px;top:140px;width:1px;height:24px;background:#808080;"></div><svg style="position:absolute;left:811px;top:143px;" width="18" height="18" viewBox="0 0 18 18"><path d="M8.500 1L11.500 4.500H10.500V6.500H12.500V5.500L16 8.500L12.500 11.500V10.500H10.500V12.500H11.500L8.500 16L5.500 12.500H6.500V10.500H4.500V11.500L1 8.500L4.500 5.500V6.500H6.500V4.500H5.500Z" fill="#fff" stroke="#4a4f80" stroke-width="1.300" stroke-linejoin="round" transform="translate(1.200,1) scale(0.860)"/></svg><div style="left:834px;top:140px;width:24px;height:24px;background:#D4D0C8;"></div><div style="left:834px;top:140px;width:24px;height:1px;background:#fff;"></div><div style="left:834px;top:140px;width:1px;height:24px;background:#fff;"></div><div style="left:834px;top:163px;width:24px;height:1px;background:#808080;"></div><div style="left:857px;top:140px;width:1px;height:24px;background:#808080;"></div><svg style="position:absolute;left:837px;top:143px;" width="18" height="18" viewBox="0 0 18 18"><path d="M3.600 7.500a5.500 5.500 0 1 1 1.600 5.400" fill="none" stroke="#3a3f60" stroke-width="1.400"/><path d="M1 6.500l5.500-1-2.500 4.500z" fill="#3a3f60"/></svg><div style="left:859px;top:140px;width:24px;height:24px;background:#F1EFE9;"></div><div style="left:859px;top:140px;width:24px;height:1px;background:#808080;"></div><div style="left:859px;top:140px;width:1px;height:24px;background:#808080;"></div><div style="left:859px;top:163px;width:24px;height:1px;background:#fff;"></div><div style="left:882px;top:140px;width:1px;height:24px;background:#fff;"></div><svg style="position:absolute;left:862px;top:143px;" width="18" height="18" viewBox="0 0 18 18"><path d="M5 2.500h8.500l-3 5h-8.500z" fill="#fff" stroke="#3a3f60" stroke-width="1.200"/><path d="M2 7.500h8.500l2.500 6h-8.500z" fill="#dcdcee" stroke="#a8a8cc"/><path d="M15 1.500v7" stroke="#1a1a2a" stroke-width="1.400"/><path d="M12.800 7.500h4.400l-2.200 3.500z" fill="#1a1a2a"/></svg><div style="left:885px;top:140px;width:24px;height:24px;background:#D4D0C8;"></div><div style="left:885px;top:140px;width:24px;height:1px;background:#fff;"></div><div style="left:885px;top:140px;width:1px;height:24px;background:#fff;"></div><div style="left:885px;top:163px;width:24px;height:1px;background:#808080;"></div><div style="left:908px;top:140px;width:1px;height:24px;background:#808080;"></div><svg style="position:absolute;left:888px;top:143px;" width="18" height="18" viewBox="0 0 18 18"><rect x="3.500" y="1.500" width="13" height="13" fill="none" stroke="#3a3f60" stroke-dasharray="1 2" shape-rendering="crispEdges"/><rect x="3.500" y="7.500" width="8" height="7" fill="#fff" stroke="#3a3f60" stroke-width="1.200"/><rect x="4.500" y="11" width="6" height="3" fill="#dcdce6"/><path d="M7.500 6v-3M14 11.500h-2.500" stroke="#1a1a2a" stroke-width="1.200"/><path d="M5.500 4.500h4l-2-2.500zM13 9.500v4l2.500-2z" fill="#1a1a2a"/></svg><div style="left:910px;top:140px;width:24px;height:24px;background:#D4D0C8;"></div><div style="left:910px;top:140px;width:24px;height:1px;background:#fff;"></div><div style="left:910px;top:140px;width:1px;height:24px;background:#fff;"></div><div style="left:910px;top:163px;width:24px;height:1px;background:#808080;"></div><div style="left:933px;top:140px;width:1px;height:24px;background:#808080;"></div><svg style="position:absolute;left:913px;top:143px;" width="18" height="18" viewBox="0 0 18 18"><path d="M3 8.500h8l6 6h-8z" fill="#fff" stroke="#3a3f60" stroke-width="1.300"/><path d="M7 12h8l2 2.500h-8z" fill="#dcdce6"/><path d="M5 4h8" stroke="#1a1a2a" stroke-width="1.200"/><path d="M6.500 1.500l-3.500 2.500 3.500 2.500z" fill="#1a1a2a"/></svg><div style="left:808px;top:171px;width:144px;height:1px;background:#808080;"></div><div style="left:808px;top:172px;width:144px;height:1px;background:#fff;"></div><div class="t" style="left:808px;top:183px;font-family:'Liberation Mono';font-size:12px;letter-spacing:-1.200px;"><span class="cjk" style="font-size:12px;">缩放</span>:</div><div class="t" style="left:912px;top:183px;font-family:'Liberation Mono';font-size:12px;letter-spacing:-1.200px;"><span class="cjk" style="font-size:12px;">镜像</span>:</div><div class="t" style="left:808px;top:213px;font-size:11px;color:#0A246A;">H:</div><div style="left:843px;top:208px;width:62px;height:23px;background:#fff;"></div><div style="left:843px;top:208px;width:62px;height:1px;background:#868686;"></div><div style="left:843px;top:208px;width:1px;height:23px;background:#868686;"></div><div style="left:843px;top:230px;width:62px;height:1px;background:#fff;"></div><div style="left:904px;top:208px;width:1px;height:23px;background:#fff;"></div><div style="left:887px;top:210px;width:16px;height:9px;background:#D4D0C8;"></div><div style="left:887px;top:210px;width:16px;height:1px;background:#fff;"></div><div style="left:887px;top:210px;width:1px;height:9px;background:#fff;"></div><div style="left:887px;top:218px;width:16px;height:1px;background:#808080;"></div><div style="left:902px;top:210px;width:1px;height:9px;background:#808080;"></div><div style="left:887px;top:219px;width:16px;height:10px;background:#D4D0C8;"></div><div style="left:887px;top:219px;width:16px;height:1px;background:#fff;"></div><div style="left:887px;top:219px;width:1px;height:10px;background:#fff;"></div><div style="left:887px;top:228px;width:16px;height:1px;background:#808080;"></div><div style="left:902px;top:219px;width:1px;height:10px;background:#808080;"></div><svg style="position:absolute;left:891px;top:212px;" width="8" height="4"><path d="M4 0l4 4h-8z" fill="#000"/></svg><svg style="position:absolute;left:891px;top:222px;" width="8" height="4"><path d="M0 0h8l-4 4z" fill="#000"/></svg><div class="t" style="left:847px;top:213px;font-size:11px;">120.0</div><div class="t" style="left:907px;top:215px;font-family:'Liberation Mono';font-size:10px;font-weight:bold;">%</div><div class="t" style="left:808px;top:240px;font-family:'Liberation Mono';font-size:12px;letter-spacing:-1.200px;"><span class="cjk" style="font-size:12px;">垂直</span>:</div><div style="left:843px;top:236px;width:62px;height:23px;background:#fff;"></div><div style="left:843px;top:236px;width:62px;height:1px;background:#868686;"></div><div style="left:843px;top:236px;width:1px;height:23px;background:#868686;"></div><div style="left:843px;top:258px;width:62px;height:1px;background:#fff;"></div><div style="left:904px;top:236px;width:1px;height:23px;background:#fff;"></div><div style="left:887px;top:238px;width:16px;height:9px;background:#D4D0C8;"></div><div style="left:887px;top:238px;width:16px;height:1px;background:#fff;"></div><div style="left:887px;top:238px;width:1px;height:9px;background:#fff;"></div><div style="left:887px;top:246px;width:16px;height:1px;background:#808080;"></div><div style="left:902px;top:238px;width:1px;height:9px;background:#808080;"></div><div style="left:887px;top:247px;width:16px;height:10px;background:#D4D0C8;"></div><div style="left:887px;top:247px;width:16px;height:1px;background:#fff;"></div><div style="left:887px;top:247px;width:1px;height:10px;background:#fff;"></div><div style="left:887px;top:256px;width:16px;height:1px;background:#808080;"></div><div style="left:902px;top:247px;width:1px;height:10px;background:#808080;"></div><svg style="position:absolute;left:891px;top:240px;" width="8" height="4"><path d="M4 0l4 4h-8z" fill="#000"/></svg><svg style="position:absolute;left:891px;top:250px;" width="8" height="4"><path d="M0 0h8l-4 4z" fill="#000"/></svg><div class="t" style="left:847px;top:241px;font-size:11px;">120.0</div><div class="t" style="left:907px;top:243px;font-family:'Liberation Mono';font-size:10px;font-weight:bold;">%</div><div style="left:927px;top:208px;width:46px;height:23px;background:#F1EFE9;"></div><div style="left:927px;top:208px;width:46px;height:1px;background:#808080;"></div><div style="left:927px;top:208px;width:1px;height:23px;background:#808080;"></div><div style="left:927px;top:230px;width:46px;height:1px;background:#fff;"></div><div style="left:972px;top:208px;width:1px;height:23px;background:#fff;"></div><svg style="position:absolute;left:940px;top:212px;" width="20" height="14"><rect x="0.5" y="5.500" width="8" height="7" fill="#c8cadc" stroke="#4a4f80"/><rect x="10.5" y="5.500" width="8" height="7" fill="#e4e4f0" stroke="#8a8eb8"/><path d="M5 2.500h9" stroke="#000"/><path d="M12.500 0.500l2.500 2-2.500 2z" fill="#000"/></svg><div style="left:927px;top:236px;width:46px;height:23px;background:#D4D0C8;"></div><div style="left:927px;top:236px;width:46px;height:1px;background:#fff;"></div><div style="left:927px;top:236px;width:1px;height:23px;background:#fff;"></div><div style="left:927px;top:258px;width:46px;height:1px;background:#808080;"></div><div style="left:972px;top:236px;width:1px;height:23px;background:#808080;"></div><svg style="position:absolute;left:942px;top:240px;" width="16" height="16"><rect x="5.500" y="0.500" width="8" height="6" fill="#e4e4f0" stroke="#8a8eb8"/><rect x="5.500" y="8.500" width="8" height="6" fill="#fff" stroke="#4a4f80"/><path d="M2.500 3v10M1 5l1.500-2" stroke="#000" fill="none"/></svg><div style="left:810px;top:327px;width:13px;height:13px;background:#fff;"></div><div style="left:810px;top:327px;width:13px;height:1px;background:#868686;"></div><div style="left:810px;top:327px;width:1px;height:13px;background:#868686;"></div><div style="left:810px;top:339px;width:13px;height:1px;background:#fff;"></div><div style="left:822px;top:327px;width:1px;height:13px;background:#fff;"></div><svg style="position:absolute;left:813px;top:330px;" width="7" height="7"><path d="M0.500 3l2 2.500 4-5" fill="none" stroke="#000" stroke-width="1.800"/></svg><div class="t" style="left:828px;top:328px;"><span class="cjk" style="font-size:12px;">按比例</span></div><div style="left:832px;top:357px;width:9px;height:1px;background:#808080;"></div><div style="left:856px;top:357px;width:9px;height:1px;background:#808080;"></div><div style="left:832px;top:397px;width:9px;height:1px;background:#808080;"></div><div style="left:856px;top:397px;width:9px;height:1px;background:#808080;"></div><div style="left:823px;top:366px;width:1px;height:4px;background:#808080;"></div><div style="left:823px;top:385px;width:1px;height:6px;background:#808080;"></div><div style="left:871px;top:366px;width:1px;height:4px;background:#808080;"></div><div style="left:871px;top:385px;width:1px;height:6px;background:#808080;"></div><div style="left:817px;top:351px;width:13px;height:13px;background:#fff;"></div><div style="left:817px;top:351px;width:13px;height:1px;background:#868686;"></div><div style="left:817px;top:351px;width:1px;height:13px;background:#868686;"></div><div style="left:817px;top:363px;width:13px;height:1px;background:#fff;"></div><div style="left:829px;top:351px;width:1px;height:13px;background:#fff;"></div><div style="left:841px;top:351px;width:13px;height:13px;background:#fff;"></div><div style="left:841px;top:351px;width:13px;height:1px;background:#868686;"></div><div style="left:841px;top:351px;width:1px;height:13px;background:#868686;"></div><div style="left:841px;top:363px;width:13px;height:1px;background:#fff;"></div><div style="left:853px;top:351px;width:1px;height:13px;background:#fff;"></div><div style="left:865px;top:351px;width:13px;height:13px;background:#fff;"></div><div style="left:865px;top:351px;width:13px;height:1px;background:#868686;"></div><div style="left:865px;top:351px;width:1px;height:13px;background:#868686;"></div><div style="left:865px;top:363px;width:13px;height:1px;background:#fff;"></div><div style="left:877px;top:351px;width:1px;height:13px;background:#fff;"></div><div style="left:817px;top:370px;width:13px;height:13px;background:#fff;"></div><div style="left:817px;top:370px;width:13px;height:1px;background:#868686;"></div><div style="left:817px;top:370px;width:1px;height:13px;background:#868686;"></div><div style="left:817px;top:382px;width:13px;height:1px;background:#fff;"></div><div style="left:829px;top:370px;width:1px;height:13px;background:#fff;"></div><svg style="position:absolute;left:841px;top:370px;" width="13" height="13"><circle cx="6.500" cy="6.500" r="5.500" fill="#fff" stroke="#909090"/><path d="M2.600 10.400a5.500 5.500 0 0 1 0-7.800 5.500 5.500 0 0 1 7.800 0" fill="none" stroke="#707070"/></svg><div style="left:865px;top:370px;width:13px;height:13px;background:#fff;"></div><div style="left:865px;top:370px;width:13px;height:1px;background:#868686;"></div><div style="left:865px;top:370px;width:1px;height:13px;background:#868686;"></div><div style="left:865px;top:382px;width:13px;height:1px;background:#fff;"></div><div style="left:877px;top:370px;width:1px;height:13px;background:#fff;"></div><svg style="position:absolute;left:868px;top:373px;" width="7" height="7"><path d="M0.500 3l2 2.500 4-5" fill="none" stroke="#000" stroke-width="1.800"/></svg><div style="left:817px;top:391px;width:13px;height:13px;background:#fff;"></div><div style="left:817px;top:391px;width:13px;height:1px;background:#868686;"></div><div style="left:817px;top:391px;width:1px;height:13px;background:#868686;"></div><div style="left:817px;top:403px;width:13px;height:1px;background:#fff;"></div><div style="left:829px;top:391px;width:1px;height:13px;background:#fff;"></div><div style="left:841px;top:391px;width:13px;height:13px;background:#fff;"></div><div style="left:841px;top:391px;width:13px;height:1px;background:#868686;"></div><div style="left:841px;top:391px;width:1px;height:13px;background:#868686;"></div><div style="left:841px;top:403px;width:13px;height:1px;background:#fff;"></div><div style="left:853px;top:391px;width:1px;height:13px;background:#fff;"></div><div style="left:865px;top:391px;width:13px;height:13px;background:#fff;"></div><div style="left:865px;top:391px;width:13px;height:1px;background:#868686;"></div><div style="left:865px;top:391px;width:1px;height:13px;background:#868686;"></div><div style="left:865px;top:403px;width:13px;height:1px;background:#fff;"></div><div style="left:877px;top:391px;width:1px;height:13px;background:#fff;"></div><svg style="position:absolute;left:905px;top:359px;" width="40" height="40"><defs><linearGradient id="pg" x1="0" y1="0" x2="0" y2="1"><stop offset="0" stop-color="#c8c8ee"/><stop offset="0.5" stop-color="#9a9acc"/><stop offset="1" stop-color="#c8c8ee"/></linearGradient></defs><rect x="5.500" y="5.500" width="28" height="28" fill="url(#pg)" stroke="#a8a8d0"/><path d="M19.500 1v37M1 19.500h37" stroke="#444"/><path d="M19.500 0l-2.500 3.500h5zM19.500 39l-2.500-3.500h5zM0 19.500l3.500-2.500v5zM39 19.500l-3.500-2.500v5z" fill="#444"/><path d="M8 9.500h10M22 9.500h10" stroke="#fff" stroke-dasharray="1.500 1.500" opacity="0.8"/><path d="M8 13.500h10M22 13.500h10" stroke="#fff" stroke-dasharray="1.500 1.500" opacity="0.8"/><path d="M8 17.500h10M22 17.500h10" stroke="#fff" stroke-dasharray="1.500 1.500" opacity="0.8"/><path d="M8 23.500h10M22 23.500h10" stroke="#fff" stroke-dasharray="1.500 1.500" opacity="0.8"/><path d="M8 27.500h10M22 27.500h10" stroke="#fff" stroke-dasharray="1.500 1.500" opacity="0.8"/><path d="M8 31.500h10M22 31.500h10" stroke="#fff" stroke-dasharray="1.500 1.500" opacity="0.8"/></svg><div style="left:808px;top:416px;width:143px;height:1px;background:#808080;"></div><div style="left:808px;top:417px;width:143px;height:1px;background:#fff;"></div><div class="t" style="left:808px;top:428px;font-family:'Liberation Mono';font-size:12px;letter-spacing:-1.200px;"><span class="cjk" style="font-size:12px;">副本</span>:</div><div style="left:862px;top:421px;width:90px;height:23px;background:#fff;"></div><div style="left:862px;top:421px;width:90px;height:1px;background:#868686;"></div><div style="left:862px;top:421px;width:1px;height:23px;background:#868686;"></div><div style="left:862px;top:443px;width:90px;height:1px;background:#fff;"></div><div style="left:951px;top:421px;width:1px;height:23px;background:#fff;"></div><div style="left:934px;top:423px;width:16px;height:9px;background:#D4D0C8;"></div><div style="left:934px;top:423px;width:16px;height:1px;background:#fff;"></div><div style="left:934px;top:423px;width:1px;height:9px;background:#fff;"></div><div style="left:934px;top:431px;width:16px;height:1px;background:#808080;"></div><div style="left:949px;top:423px;width:1px;height:9px;background:#808080;"></div><div style="left:934px;top:432px;width:16px;height:10px;background:#D4D0C8;"></div><div style="left:934px;top:432px;width:16px;height:1px;background:#fff;"></div><div style="left:934px;top:432px;width:1px;height:10px;background:#fff;"></div><div style="left:934px;top:441px;width:16px;height:1px;background:#808080;"></div><div style="left:949px;top:432px;width:1px;height:10px;background:#808080;"></div><svg style="position:absolute;left:938px;top:425px;" width="8" height="4"><path d="M4 0l4 4h-8z" fill="#000"/></svg><svg style="position:absolute;left:938px;top:435px;" width="8" height="4"><path d="M0 0h8l-4 4z" fill="#000"/></svg><div class="t" style="left:866px;top:426px;font-size:11px;">1</div><div style="left:808px;top:449px;width:144px;height:23px;background:#D4D0C8;"></div><div style="left:808px;top:449px;width:144px;height:1px;background:#fff;"></div><div style="left:808px;top:449px;width:1px;height:23px;background:#fff;"></div><div style="left:808px;top:471px;width:144px;height:1px;background:#6e6e6e;"></div><div style="left:951px;top:449px;width:1px;height:23px;background:#6e6e6e;"></div><div class="t" style="left:868px;top:454px;"><span class="cjk" style="font-size:12px;">应用</span></div><div style="left:979px;top:133px;width:1px;height:359px;background:#9c9a94;"></div><div style="left:1003px;top:110px;width:1px;height:582px;background:#8a8884;"></div><div style="left:1004px;top:110px;width:1px;height:582px;background:#fff;"></div><svg style="position:absolute;left:979px;top:136px;" width="21" height="84"><path d="M0.500 0.500H17.5L20.5 3.500V80.5L17.5 83.5H0.500" fill="none" stroke="#9c9a94"/></svg><svg style="position:absolute;left:979px;top:219px;" width="21" height="51"><path d="M0.500 0.500H17.5L20.5 3.500V47.5L17.5 50.5H0.500" fill="none" stroke="#9c9a94"/></svg><svg style="position:absolute;left:979px;top:269px;" width="21" height="53"><path d="M0.500 0.500H17.5L20.5 3.500V49.5L17.5 52.5H0.500" fill="none" stroke="#9c9a94"/></svg><svg style="position:absolute;left:979px;top:321px;" width="21" height="71"><path d="M0.500 0.500H17.5L20.5 3.500V67.5L17.5 70.5H0.500" fill="none" stroke="#9c9a94"/></svg><svg style="position:absolute;left:979px;top:391px;" width="21" height="101"><path d="M0.500 0.500H17.5L20.5 3.500V97.5L17.5 100.5H0.500" fill="none" stroke="#9c9a94"/></svg><svg style="position:absolute;left:979px;top:492px;" width="21" height="71"><defs><linearGradient id="tg" x1="0" y1="0" x2="1" y2="0"><stop offset="0" stop-color="#D4D0C8"/><stop offset="1" stop-color="#F8F7F4"/></linearGradient></defs><path d="M0 0.500H17.5L20.5 3.500V67.5L17.5 70.5H0" fill="url(#tg)" stroke="none"/><path d="M4 0.500H17.5L20.5 3.500V67.5L17.5 70.5H4" fill="none" stroke="#9c9a94"/></svg><svg style="position:absolute;left:979px;top:563px;" width="5" height="130"><path d="M4 0.500L0.500 4V130" fill="none" stroke="#9c9a94"/></svg><svg style="position:absolute;left:981px;top:141px;" width="18" height="17"><path d="M2.500 3.500h4M2.500 4v11" stroke="#4a4f80" stroke-dasharray="1 1"/><circle cx="2.500" cy="3.500" r="1.500" fill="#fff" stroke="#4a4f80"/><rect x="6.500" y="0.500" width="5" height="5" fill="#c8cadc" stroke="#4a4f80"/><rect x="12.500" y="7.500" width="5" height="5" fill="#c8cadc" stroke="#4a4f80"/><path d="M8 7v8M8 10h4M8 15h5" stroke="#4a4f80" stroke-dasharray="1 1"/><rect x="13.500" y="3.500" width="3" height="2.500" fill="#fff" stroke="#4a4f80"/><rect x="13.500" y="13.500" width="3" height="2.500" fill="#fff" stroke="#4a4f80"/></svg><svg style="position:absolute;left:984px;top:161px;" width="11" height="56.5"><text transform="translate(1.3,0) rotate(90)" font-family="'Liberation Serif','Noto Serif CJK SC',serif" font-size="11" letter-spacing="-0.1" fill="#333">对象管理器</text></svg><svg style="position:absolute;left:981px;top:224px;" width="18" height="16"><path d="M1.500 1.500v11l2.500-2.500 2 4.500 2-1-2-4.500h3.500z" fill="#fff" stroke="#4a4f80"/><text x="10" y="9" font-size="12" font-family="Liberation Sans" fill="#4a4f80" font-weight="bold">?</text></svg><svg style="position:absolute;left:984px;top:244px;" width="11" height="23.8"><text transform="translate(1.3,0) rotate(90)" font-family="'Liberation Serif','Noto Serif CJK SC',serif" font-size="11" letter-spacing="-0.1" fill="#333">提示</text></svg><svg style="position:absolute;left:982px;top:275px;" width="16" height="16"><defs><radialGradient id="lg" cx="0.4" cy="0.300" r="0.800"><stop offset="0" stop-color="#fff"/><stop offset="0.600" stop-color="#e8e8f0"/><stop offset="1" stop-color="#4a4f80"/></radialGradient></defs><circle cx="8" cy="8" r="7.500" fill="url(#lg)" stroke="#5a5f90" stroke-width="0.800"/></svg><svg style="position:absolute;left:984px;top:296px;" width="11" height="23.8"><text transform="translate(1.3,0) rotate(90)" font-family="'Liberation Serif','Noto Serif CJK SC',serif" font-size="11" letter-spacing="-0.1" fill="#333">透镜</text></svg><svg style="position:absolute;left:982px;top:325px;" width="16" height="17"><path d="M8 0l2 4 5-1-2 5 3 4-5 1-1 4-4-3-4 2 0-5-2-4 4-1z" fill="#9a9ec8" stroke="#6a6f9c"/><path d="M0 7l4-3 4 3-4 3z" fill="#e88a10"/><rect x="7" y="7" width="7" height="7" fill="#dde" stroke="#889"/></svg><svg style="position:absolute;left:984px;top:347px;" width="11" height="42"><text transform="translate(1.3,0) rotate(90)" font-family="'Liberation Serif','Noto Serif CJK SC',serif" font-size="11" letter-spacing="-1" fill="#333">对象属性</text></svg><svg style="position:absolute;left:982px;top:396px;" width="17" height="14"><path d="M1 3c3-3 8-3 11 1l-3 1 2 3c-4 1-7-1-10-5z" fill="#c01010"/><circle cx="11" cy="8" r="3.500" fill="#111"/><path d="M3 9l4 3" stroke="#a01010" stroke-width="2"/></svg><div class="t" style="left:996px;top:415px;transform-origin:0 0;transform:rotate(90deg);font-family:'Liberation Serif';font-size:11px;letter-spacing:0.950px;color:#333;">ConceptShare</div><svg style="position:absolute;left:981px;top:496px;" width="18" height="17"><path d="M3 8a5 5 0 1 1 2 5" fill="none" stroke="#4a4f80" stroke-width="1.600"/><path d="M0.500 8l3 3.500 2.500-4z" fill="#4a4f80"/><path d="M13 0v8M9 4h8" stroke="#4a4f80"/><path d="M13 0l-1.500 2h3zM13 8l-1.500-2h3zM9 4l2-1.500v3zM17 4l-2-1.500v3z" fill="#4a4f80"/></svg><svg style="position:absolute;left:985px;top:516px;" width="11" height="23.0"><text transform="translate(1.3,0) rotate(90)" font-family="'Liberation Serif','Noto Serif CJK SC',serif" font-size="11" letter-spacing="-0.5" fill="#222">转换</text></svg><div style="left:983px;top:543px;width:16px;height:16px;border:1px solid #8c8a86;"></div><svg style="position:absolute;left:986px;top:546px;" width="10" height="10"><path d="M1.500 1.500l7 7M8.500 1.500l-7 7" stroke="#000" stroke-width="2.200"/></svg><div style="left:1008px;top:112px;width:13px;height:1px;background:#fff;"></div><div style="left:1008px;top:113px;width:13px;height:1px;background:#808080;"></div><div style="left:1008px;top:114px;width:13px;height:1px;background:#fff;"></div><div style="left:1008px;top:115px;width:13px;height:1px;background:#808080;"></div><div style="left:1008px;top:116px;width:13px;height:1px;background:#fff;"></div><div style="left:1008px;top:117px;width:13px;height:1px;background:#808080;"></div><svg style="position:absolute;left:1007px;top:120px;" width="15" height="15"><defs><radialGradient id="pb" cx="0.4" cy="0.350" r="0.700"><stop offset="0" stop-color="#fff"/><stop offset="0.700" stop-color="#f4f4f4"/><stop offset="1" stop-color="#999"/></radialGradient></defs><circle cx="7.500" cy="7.500" r="6.800" fill="url(#pb)" stroke="#999" stroke-width="0.700"/><path d="M5.500 4.500l5 3-5 3z" fill="#000"/></svg><svg style="position:absolute;left:1008px;top:138px;" width="13" height="13"><path d="M1 12l1-3 5-5 2 2-5 5z" fill="#ccc" stroke="#bbb"/><path d="M7 3l2-2c1.500-1.500 4 1 2.500 2.500l-2 2z" fill="#b8b8b8"/></svg><svg style="position:absolute;left:1010px;top:159px;" width="8" height="4"><path d="M4 0l4 4h-8z" fill="#000"/></svg><div style="left:1005px;top:170px;width:18px;height:18px;background:#fff;border:1px solid #555;"></div><svg style="position:absolute;left:1006px;top:171px;" width="16" height="16"><path d="M0 0l16 16M16 0l-16 16" stroke="#000" stroke-width="1"/></svg><div style="left:1005px;top:187px;width:18px;height:18px;background:#B08083;border:1px solid #555;"></div><div style="left:1005px;top:204px;width:18px;height:18px;background:#CF7370;border:1px solid #555;"></div><div style="left:1005px;top:221px;width:18px;height:18px;background:#CF7089;border:1px solid #555;"></div><div style="left:1005px;top:238px;width:18px;height:18px;background:#E60046;border:1px solid #555;"></div><div style="left:1005px;top:255px;width:18px;height:18px;background:#F08A82;border:1px solid #555;"></div><div style="left:1005px;top:272px;width:18px;height:18px;background:#EB5468;border:1px solid #555;"></div><div style="left:1005px;top:289px;width:18px;height:18px;background:#D7A0A0;border:1px solid #555;"></div><div style="left:1005px;top:306px;width:18px;height:18px;background:#85586F;border:1px solid #555;"></div><div style="left:1005px;top:323px;width:18px;height:18px;background:#AD5A87;border:1px solid #555;"></div><div style="left:1005px;top:340px;width:18px;height:18px;background:#F5B2D0;border:1px solid #555;"></div><div style="left:1005px;top:357px;width:18px;height:18px;background:#D6A0BE;border:1px solid #555;"></div><div style="left:1005px;top:374px;width:18px;height:18px;background:#B2A2AB;border:1px solid #555;"></div><div style="left:1005px;top:374px;width:18px;height:18px;background:#B2A2AB;border:1px solid #fff;"></div><div style="left:1006px;top:375px;width:16px;height:16px;background:#B2A2AB;border:2px solid #000;"></div><div style="left:1005px;top:391px;width:18px;height:18px;background:#DCC4D2;border:1px solid #555;"></div><div style="left:1005px;top:408px;width:18px;height:18px;background:#B26A9E;border:1px solid #555;"></div><div style="left:1005px;top:425px;width:18px;height:18px;background:#CB4F9B;border:1px solid #555;"></div><div style="left:1005px;top:442px;width:18px;height:18px;background:#D07FB8;border:1px solid #555;"></div><div style="left:1005px;top:459px;width:18px;height:18px;background:#B898B8;border:1px solid #555;"></div><div style="left:1005px;top:476px;width:18px;height:18px;background:#D5A8D2;border:1px solid #555;"></div><div style="left:1005px;top:493px;width:18px;height:18px;background:#70586F;border:1px solid #555;"></div><div style="left:1005px;top:510px;width:18px;height:18px;background:#967898;border:1px solid #555;"></div><div style="left:1005px;top:527px;width:18px;height:18px;background:#A878B8;border:1px solid #555;"></div><div style="left:1005px;top:544px;width:18px;height:18px;background:#A50082;border:1px solid #555;"></div><div style="left:1005px;top:561px;width:18px;height:18px;background:#8F3A83;border:1px solid #555;"></div><div style="left:1005px;top:578px;width:18px;height:18px;background:#7D489E;border:1px solid #555;"></div><div style="left:1005px;top:595px;width:18px;height:18px;background:#79528A;border:1px solid #555;"></div><div style="left:1005px;top:612px;width:18px;height:18px;background:#6C3888;border:1px solid #555;"></div><div style="left:1005px;top:629px;width:18px;height:18px;background:#000000;border:1px solid #555;"></div><svg style="position:absolute;left:1009px;top:653px;" width="10" height="5"><path d="M0 0h10l-5 5z" fill="#999"/><path d="M5 5l5-5" stroke="#fff"/></svg><svg style="position:absolute;left:1010px;top:668px;" width="8" height="9"><path d="M0.500 0v9" stroke="#000" stroke-width="1.500"/><path d="M7 0v9l-5.500-4.500z" fill="#000"/></svg><div style="left:771px;top:131px;width:16px;height:544px;background-image:conic-gradient(#fff 25%,#D4D0C8 0 50%,#fff 0 75%,#D4D0C8 0);background-size:2px 2px;"></div><div style="left:771px;top:131px;width:16px;height:16px;background:#D4D0C8;"></div><div style="left:771px;top:131px;width:16px;height:1px;background:#fff;"></div><div style="left:771px;top:131px;width:1px;height:16px;background:#fff;"></div><div style="left:771px;top:146px;width:16px;height:1px;background:#808080;"></div><div style="left:786px;top:131px;width:1px;height:16px;background:#808080;"></div><svg style="position:absolute;left:775px;top:137px;" width="7" height="4"><path d="M3.500 0l3.500 4h-7z" fill="#000"/></svg><div style="left:771px;top:659px;width:16px;height:16px;background:#D4D0C8;"></div><div style="left:771px;top:659px;width:16px;height:1px;background:#fff;"></div><div style="left:771px;top:659px;width:1px;height:16px;background:#fff;"></div><div style="left:771px;top:674px;width:16px;height:1px;background:#808080;"></div><div style="left:786px;top:659px;width:1px;height:16px;background:#808080;"></div><svg style="position:absolute;left:775px;top:665px;" width="7" height="4"><path d="M0 0h7l-3.500 4z" fill="#000"/></svg><div style="left:771px;top:259px;width:16px;height:292px;background:#D4D0C8;"></div><div style="left:771px;top:259px;width:16px;height:1px;background:#D4D0C8;"></div><div style="left:771px;top:259px;width:1px;height:292px;background:#D4D0C8;"></div><div style="left:771px;top:550px;width:16px;height:1px;background:#404040;"></div><div style="left:786px;top:259px;width:1px;height:292px;background:#404040;"></div><div style="left:772px;top:260px;width:14px;height:1px;background:#fff;"></div><div style="left:772px;top:260px;width:1px;height:290px;background:#fff;"></div><div style="left:772px;top:549px;width:14px;height:1px;background:#808080;"></div><div style="left:785px;top:260px;width:1px;height:290px;background:#808080;"></div><div style="left:787px;top:131px;width:1px;height:560px;background:#D4D0C8;"></div><div style="left:51px;top:675px;width:737px;height:17px;background:#D4D0C8;"></div><div style="left:51px;top:675px;width:370px;height:1px;background:#808080;"></div><svg style="position:absolute;left:54px;top:677px;" width="10" height="13"><path d="M0.500 0.500h5.500l3.500 3.500v8.500h-9z" fill="none" stroke="#000"/><path d="M6 0.500v3.500h3.500" fill="none" stroke="#000"/><path d="M2.500 7.500h5M5 5v5" stroke="#000"/></svg><svg style="position:absolute;left:71px;top:679px;" width="8" height="9"><path d="M0.500 0v9" stroke="#808080" stroke-width="1.400"/><path d="M7 0v9l-5-4.500z" fill="#808080"/></svg><svg style="position:absolute;left:89px;top:679px;" width="6" height="9"><path d="M6 0v9l-5.500-4.500z" fill="#808080"/></svg><div class="t" style="left:121px;top:678px;font-size:12px;letter-spacing:0.3px;">1 / 1</div><svg style="position:absolute;left:175px;top:679px;" width="6" height="9"><path d="M0 0v9l5.500-4.500z" fill="#808080"/></svg><svg style="position:absolute;left:189px;top:679px;" width="8" height="9"><path d="M7.500 0v9" stroke="#808080" stroke-width="1.400"/><path d="M1 0v9l5-4.500z" fill="#808080"/></svg><svg style="position:absolute;left:204px;top:677px;" width="10" height="13"><path d="M0.500 0.500h5.500l3.500 3.500v8.500h-9z" fill="none" stroke="#000"/><path d="M6 0.500v3.500h3.500" fill="none" stroke="#000"/><path d="M2.500 7.500h5M5 5v5" stroke="#000"/></svg><svg style="position:absolute;left:217px;top:675px;" width="56" height="17"><path d="M0 0.500H46L54.500 9V16.500H0z" fill="#fff" stroke="none"/><path d="M46 0.500L54.500 9V16.500" fill="none" stroke="#808080"/><path d="M0 0.500H46" stroke="#808080"/></svg><div class="t" style="left:233px;top:677px;font-size:12px;"><span class="cjk" style="font-size:12px;">页</span> 1</div><div style="left:413px;top:677px;width:1px;height:12px;background:#fff;"></div><div style="left:414px;top:677px;width:1px;height:12px;background:#808080;"></div><div style="left:416px;top:677px;width:1px;height:12px;background:#fff;"></div><div style="left:417px;top:677px;width:1px;height:12px;background:#808080;"></div><div style="left:420px;top:675px;width:1px;height:16px;background:#808080;"></div><div style="left:421px;top:675px;width:350px;height:16px;background-image:conic-gradient(#fff 25%,#D4D0C8 0 50%,#fff 0 75%,#D4D0C8 0);background-size:2px 2px;"></div><div style="left:421px;top:675px;width:16px;height:16px;background:#D4D0C8;"></div><div style="left:421px;top:675px;width:16px;height:1px;background:#fff;"></div><div style="left:421px;top:675px;width:1px;height:16px;background:#fff;"></div><div style="left:421px;top:690px;width:16px;height:1px;background:#808080;"></div><div style="left:436px;top:675px;width:1px;height:16px;background:#808080;"></div><svg style="position:absolute;left:426px;top:679px;" width="4" height="8"><path d="M4 0v8l-4-4z" fill="#000"/></svg><div style="left:755px;top:675px;width:16px;height:16px;background:#D4D0C8;"></div><div style="left:755px;top:675px;width:16px;height:1px;background:#fff;"></div><div style="left:755px;top:675px;width:1px;height:16px;background:#fff;"></div><div style="left:755px;top:690px;width:16px;height:1px;background:#808080;"></div><div style="left:770px;top:675px;width:1px;height:16px;background:#808080;"></div><svg style="position:absolute;left:762px;top:679px;" width="4" height="8"><path d="M0 0v8l4-4z" fill="#000"/></svg><div style="left:443px;top:675px;width:308px;height:16px;background:#D4D0C8;"></div><div style="left:443px;top:675px;width:308px;height:1px;background:#D4D0C8;"></div><div style="left:443px;top:675px;width:1px;height:16px;background:#D4D0C8;"></div><div style="left:443px;top:690px;width:308px;height:1px;background:#404040;"></div><div style="left:750px;top:675px;width:1px;height:16px;background:#404040;"></div><div style="left:444px;top:676px;width:306px;height:1px;background:#fff;"></div><div style="left:444px;top:676px;width:1px;height:14px;background:#fff;"></div><div style="left:444px;top:689px;width:306px;height:1px;background:#808080;"></div><div style="left:749px;top:676px;width:1px;height:14px;background:#808080;"></div><svg style="position:absolute;left:772px;top:676px;" width="15" height="15"><circle cx="6" cy="6" r="5" fill="#fff" stroke="#6a6f9c" stroke-width="1.200"/><path d="M6 3v6M3 6h6" stroke="#6a6f9c"/><circle cx="6" cy="6" r="2" fill="none" stroke="#6a6f9c"/><path d="M9.500 9.500l4.500 4.500" stroke="#4a4f80" stroke-width="2"/></svg><div style="left:30px;top:692px;width:994px;height:2px;background:#fff;"></div><div class="t" style="left:36px;top:689px;transform-origin:0 0;transform:rotate(-90deg);font-size:9px;"><span class="cjk" style="font-size:9px;">毫米</span></div><div class="t" style="left:5.5px;top:699px;font-size:11px;">( 292.497, 20.941 )</div><svg style="position:absolute;left:120px;top:699px;" width="7" height="11"><path d="M0.500 0v11l6-5.500z" fill="#000"/></svg><div class="t" style="left:389px;top:698px;font-size:11px;"><span class="cjk" style="font-size:12px;">选定</span> 8 <span class="cjk" style="font-size:12px;">对象</span> <span class="cjk" style="font-size:12px;">于</span> <span class="cjk" style="font-size:12px;">图层</span> 1</div><div class="t" style="left:5px;top:719px;font-size:11px;letter-spacing:-0.21px;"><span class="cjk" style="font-size:12px;">文档颜色预置文件</span>: RGB: sRGB IEC61966-2.1; CMYK: Japan Color 2001 Coated; <span class="cjk" style="font-size:12px;">灰度</span>: Dot Gain 15%</div><svg style="position:absolute;left:504px;top:720px;" width="7" height="11"><path d="M0.500 0v11l6-5.500z" fill="#000"/></svg><svg style="position:absolute;left:771px;top:698px;" width="16" height="15"><rect x="0.500" y="0.500" width="15" height="11" fill="#e8e8f0" stroke="#6a6f9c"/><rect x="2" y="2" width="12" height="3" fill="#d88"/><rect x="2" y="5" width="12" height="3" fill="#8c8"/><rect x="2" y="8" width="12" height="2.500" fill="#88d"/><circle cx="8" cy="6" r="3" fill="#fff" stroke="#333" stroke-width="1.300"/><path d="M4 13.500h8" stroke="#6a6f9c"/></svg><div style="left:811px;top:698px;width:1px;height:13px;background:#808080;"></div><div style="left:812px;top:698px;width:1px;height:13px;background:#fff;"></div><svg style="position:absolute;left:815px;top:697px;" width="17" height="16"><path d="M7 2.500l7.500 6.500-5 6h-4l-4.500-5z" fill="#fff" stroke="#444"/><path d="M1.500 10l2.500-2.500h9.500l-4 6.500h-4z" fill="#e88a10"/><path d="M7 3c-1.500-3-4.500-1-3 2" fill="none" stroke="#444"/><path d="M14.500 9c1.500 0.500 2 2 1.500 4" fill="none" stroke="#e88a10" stroke-width="1.400"/></svg><div style="left:836px;top:697px;width:18px;height:18px;background:#fff;border:1px solid #555;"></div><svg style="position:absolute;left:837px;top:698px;" width="16" height="16"><path d="M0 0l16 16" stroke="#e0001a" stroke-width="2"/></svg><div class="t" style="left:857px;top:699px;"><span class="cjk" style="font-size:12px;">填充色</span></div><svg style="position:absolute;left:818px;top:718px;" width="10" height="17"><path d="M5 0.500c-1.500 3.500-3 6-3 9l1.500 3h3l1.500-3c0-3-1.500-5.500-3-9z" fill="#fff" stroke="#3a3f70"/><path d="M5 5v5" stroke="#3a3f70"/><path d="M1 15.500h8" stroke="#1a1f50" stroke-width="2"/></svg><div style="left:836px;top:717px;width:18px;height:18px;background:#fff;border:1px solid #555;"></div><svg style="position:absolute;left:837px;top:718px;" width="16" height="16"><path d="M0 0l16 16M16 0l-16 16" stroke="#000" stroke-width="1"/></svg><div class="t" style="left:857px;top:720px;"><span class="cjk" style="font-size:12px;">无</span></div><div style="left:0px;top:737px;width:1024px;height:1px;background:#808080;"></div><div style="left:0px;top:738px;width:1024px;height:1px;background:#fff;"></div><div style="left:2px;top:742px;width:47px;height:22px;background:#D4D0C8;"></div><div style="left:2px;top:742px;width:47px;height:1px;background:#fff;"></div><div style="left:2px;top:742px;width:1px;height:22px;background:#fff;"></div><div style="left:2px;top:763px;width:47px;height:1px;background:#404040;"></div><div style="left:48px;top:742px;width:1px;height:22px;background:#404040;"></div><div style="left:3px;top:762px;width:45px;height:1px;background:#808080;"></div><div style="left:47px;top:743px;width:1px;height:20px;background:#808080;"></div><svg style="position:absolute;left:5px;top:745px;" width="16" height="16"><path d="M1 3c2-1.500 4-1.500 6 0l-1.200 5c-2-1.500-4-1.500-6 0z" fill="#e8432a"/><path d="M8 3.300c2 1.300 4 1.300 6 0l-1.200 5c-2 1.300-4 1.300-6 0z" fill="#5cb030"/><path d="M-0.500 9c2-1.500 4-1.500 6 0l-1.200 5c-2-1.500-4-1.500-6 0z" fill="#2a6ae0"/><path d="M6.500 9.300c2 1.300 4 1.300 6 0l-1.200 5c-2 1.300-4 1.300-6 0z" fill="#f0b818"/></svg><div class="t" style="left:22px;top:746px;"><span class="cjk" style="font-size:12px;font-weight:bold;">开始</span></div><svg style="position:absolute;left:56px;top:745px;" width="17" height="17"><circle cx="8.500" cy="8.500" r="8" fill="#e8a020"/><path d="M8.500 0.500a8 8 0 0 1 8 8h-8z" fill="#3a78d0"/><path d="M0.500 8.500a8 8 0 0 0 8 8v-8z" fill="#3aa040"/><circle cx="8.500" cy="8.500" r="4.800" fill="#fff"/><path d="M7 5.500l4.500 3-4.500 3z" fill="#222"/></svg><svg style="position:absolute;left:80px;top:745px;" width="16" height="17"><rect x="1" y="3" width="13" height="13" rx="2" fill="#3a8ae8" stroke="#1a5ab8"/><rect x="3" y="5" width="9" height="9" fill="#fff"/><path d="M5 12c0-4 5-4 5-1h-4" fill="none" stroke="#2a7ad8" stroke-width="1.500"/><path d="M10 1l5 3-5 2z" fill="#3a8ae8"/></svg><svg style="position:absolute;left:103px;top:746px;" width="16" height="16"><rect x="0" y="0" width="16" height="16" fill="#dedede"/><path d="M1.500 5.500c2.500-1.500 5-1 6.500 0.500 1.500-1.500 4-2 6.500-0.500-2 1.500-4.500 2-6 1.500l0.300 7.500h-1.600l0.300-7.500c-1.500 0.500-4 0-6-1.500z" fill="#d01038"/><path d="M7 3h2v3h-2z" fill="#5a3a9a"/></svg><svg style="position:absolute;left:131px;top:745px;" width="8" height="8"><path d="M0.500 0.500l3 3-3 3M4.500 0.500l3 3-3 3" fill="none" stroke="#000" stroke-width="1.200"/></svg><div style="left:143px;top:742px;width:159px;height:22px;background-image:conic-gradient(#fff 25%,#D4D0C8 0 50%,#fff 0 75%,#D4D0C8 0);background-size:2px 2px;"></div><div style="left:143px;top:742px;width:159px;height:1px;background:#404040;"></div><div style="left:143px;top:742px;width:1px;height:22px;background:#404040;"></div><div style="left:143px;top:763px;width:159px;height:1px;background:#fff;"></div><div style="left:301px;top:742px;width:1px;height:22px;background:#fff;"></div><div style="left:144px;top:743px;width:157px;height:1px;background:#808080;"></div><div style="left:144px;top:743px;width:1px;height:20px;background:#808080;"></div><div style="left:144px;top:762px;width:157px;height:1px;background:#D4D0C8;"></div><div style="left:300px;top:743px;width:1px;height:20px;background:#D4D0C8;"></div><svg style="position:absolute;left:148px;top:745px;" width="16" height="16" viewBox="0 0 16 16"><rect x="0" y="0" width="16" height="16" fill="#7DB52F"/><path d="M2 2l5 1 6 7-3 3-7-6z" fill="#fff"/><path d="M10 13l3-3 2 4z" fill="#3C5A14"/><path d="M3 3l4 5" stroke="#7DB52F" stroke-width="1"/></svg><div class="t" style="left:167px;top:748px;font-family:'Liberation Mono';font-size:12px;letter-spacing:-1.200px;">CorelDRAW X5 - [<span class="cjk" style="font-size:12px;">未</span>...</div><svg style="position:absolute;left:912px;top:746px;" width="17" height="15"><rect x="0.800" y="4.800" width="15.400" height="9.400" rx="1.500" fill="#fff" stroke="#000" stroke-width="1.500"/><path d="M3 8h11M3 10h11M3.500 12h10" stroke="#000" stroke-dasharray="1 1"/><path d="M4.500 1.500c1 1.500 1.500 1.500 2.500 0.500s1.500-0.500 2.500 0.500 1.500 0 2.500-0.500v2.500" fill="none" stroke="#000"/></svg><div style="left:932px;top:742px;width:1px;height:24px;background:#808080;"></div><div style="left:933px;top:742px;width:1px;height:24px;background:#fff;"></div><div style="left:967px;top:742px;width:55px;height:1px;background:#808080;"></div><div style="left:967px;top:742px;width:1px;height:24px;background:#808080;"></div><div style="left:967px;top:765px;width:55px;height:1px;background:#fff;"></div><div style="left:1021px;top:742px;width:1px;height:24px;background:#fff;"></div><svg style="position:absolute;left:972px;top:751px;" width="9" height="7"><path d="M3.500 0.500l-3 3 3 3M8 0.500l-3 3 3 3" fill="none" stroke="#000" stroke-width="1.500"/></svg><svg style="position:absolute;left:985px;top:746px;" width="16" height="16"><rect x="1" y="3" width="7" height="7" fill="#2a2f6a"/><path d="M0.500 13.500c0-2 7.500-2 7.500 0s-7.500 2-7.500 0z" fill="#e8ecf8" stroke="#4a6ad0"/><rect x="3" y="10" width="3" height="2" fill="#6a8ae0"/><path d="M10 2c1.500 1.500 1.500 4.500 0 6M12.500 0.500c2.500 2.500 2.500 6.500 0 9" fill="none" stroke="#333" stroke-width="0.900"/></svg><svg style="position:absolute;left:1003px;top:745px;" width="17" height="18"><defs><radialGradient id="sp" cx="0.350" cy="0.350" r="0.700"><stop offset="0" stop-color="#e8e8e8"/><stop offset="0.500" stop-color="#8a8a8a"/><stop offset="1" stop-color="#3a3a3a"/></radialGradient></defs><ellipse cx="7" cy="7.500" rx="6" ry="6.500" fill="url(#sp)"/><circle cx="5" cy="6" r="2" fill="#555"/><path d="M9 14.500c3 0 5.500-2 6.500-5M10 17c3 0 6-2 7-5" fill="none" stroke="#8a8af0" stroke-width="0.900"/></svg></body></html>
